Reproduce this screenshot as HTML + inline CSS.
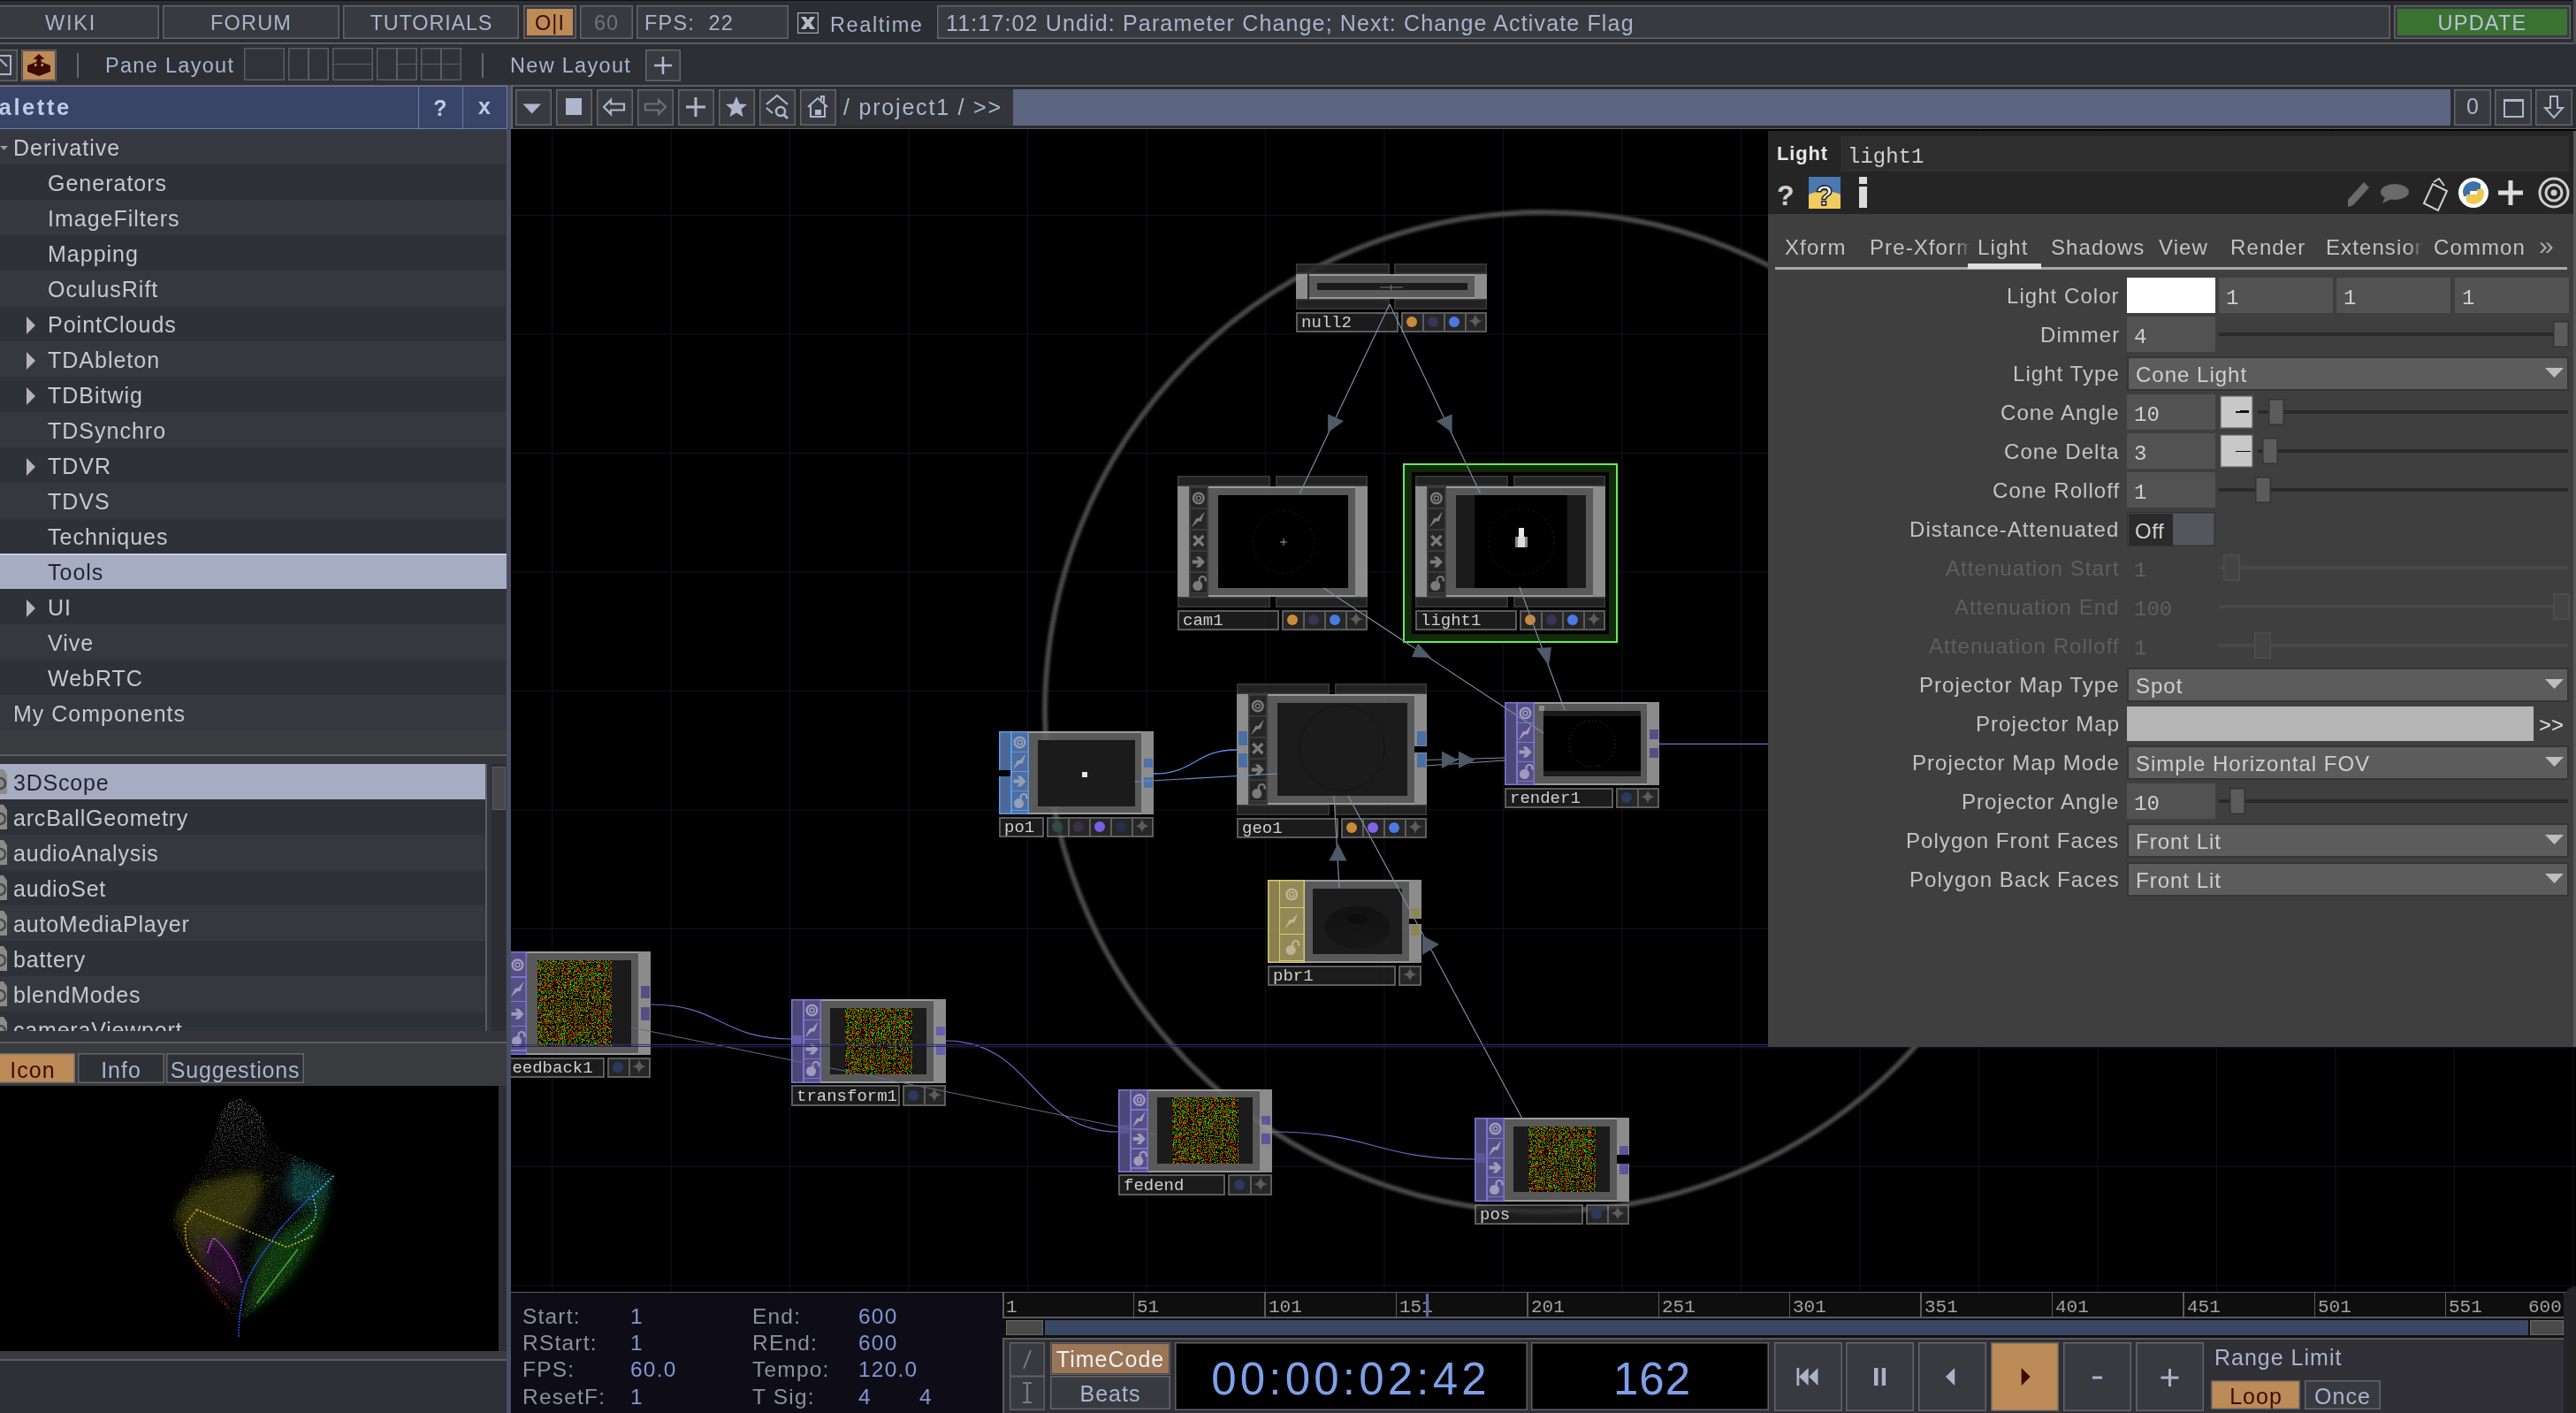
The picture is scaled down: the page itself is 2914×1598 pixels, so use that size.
<!DOCTYPE html><html><head><meta charset="utf-8"><style>html,body{margin:0;padding:0;width:2914px;height:1598px;overflow:hidden;background:#2e2f34}.a{position:absolute;box-sizing:border-box}.t{white-space:pre;-webkit-font-smoothing:antialiased;will-change:transform}svg{overflow:visible}</style></head><body><div class="a" style="left:0.0px;top:0.0px;width:2914.0px;height:1598.0px;background:#2e2f34;"></div>
<div class="a" style="left:0.0px;top:0.0px;width:2914.0px;height:1.2px;background:#111111;"></div>
<div class="a" style="left:0.0px;top:1.2px;width:2914.0px;height:46.8px;background:#2c2d32;"></div>
<div class="a" style="left:0.0px;top:48.0px;width:2914.0px;height:1.5px;background:#5c5d61;"></div>
<div class="a" style="left:-2.0px;top:6.0px;width:182.0px;height:38.0px;background:#393a40;box-shadow:inset 0 0 0 1.5px #64656a;"></div>
<div class="a t" style="top:15.1px;font-family:'Liberation Sans', sans-serif;font-size:23.5px;line-height:23.5px;color:#a9b3cc;letter-spacing:1.8px;left:-420.0px;width:1000px;text-align:center;">WIKI</div>
<div class="a" style="left:184.0px;top:6.0px;width:200.0px;height:38.0px;background:#393a40;box-shadow:inset 0 0 0 1.5px #64656a;"></div>
<div class="a t" style="top:15.1px;font-family:'Liberation Sans', sans-serif;font-size:23.5px;line-height:23.5px;color:#a9b3cc;letter-spacing:1.2px;left:-216.0px;width:1000px;text-align:center;">FORUM</div>
<div class="a" style="left:388.0px;top:6.0px;width:199.0px;height:38.0px;background:#393a40;box-shadow:inset 0 0 0 1.5px #64656a;"></div>
<div class="a t" style="top:15.1px;font-family:'Liberation Sans', sans-serif;font-size:23.5px;line-height:23.5px;color:#a9b3cc;letter-spacing:0.8px;left:-12.5px;width:1000px;text-align:center;">TUTORIALS</div>
<div class="a" style="left:592.0px;top:6.0px;width:60.0px;height:38.0px;background:#393a40;box-shadow:inset 0 0 0 1.5px #64656a;"></div>
<div class="a" style="left:596.0px;top:10.0px;width:52.0px;height:30.0px;background:#bd8b57;"></div>
<div class="a t" style="top:15.1px;font-family:'Liberation Sans', sans-serif;font-size:23.5px;line-height:23.5px;color:#3a0c08;letter-spacing:1px;left:122.0px;width:1000px;text-align:center;">O|I</div>
<div class="a" style="left:656.0px;top:6.0px;width:60.0px;height:38.0px;background:#393a40;box-shadow:inset 0 0 0 1.5px #64656a;"></div>
<div class="a t" style="top:15.1px;font-family:'Liberation Sans', sans-serif;font-size:23.5px;line-height:23.5px;color:#717277;letter-spacing:1px;left:186.0px;width:1000px;text-align:center;">60</div>
<div class="a" style="left:720.0px;top:6.0px;width:172.0px;height:38.0px;background:#393a40;box-shadow:inset 0 0 0 1.5px #64656a;"></div>
<div class="a t" style="top:15.1px;font-family:'Liberation Sans', sans-serif;font-size:23.5px;line-height:23.5px;color:#a9b3cc;letter-spacing:1.2px;left:729.0px;">FPS:&nbsp;&nbsp;22</div>
<div class="a" style="left:902.0px;top:14.0px;width:24.0px;height:24.0px;background:#2c2d32;box-shadow:inset 0 0 0 1.2px #a8a8ac;"></div>
<svg class="a" style="left:902px;top:14px;" width="24" height="24" viewBox="0 0 24 24"><path d="M4 5 H9.5 L12 8.8 L14.5 5 H20 L15 12 L20 19 H14.5 L12 15.2 L9.5 19 H4 L9 12 Z" fill="#b4bccc"/></svg>
<div class="a t" style="top:16.6px;font-family:'Liberation Sans', sans-serif;font-size:23.5px;line-height:23.5px;color:#a9b3cc;letter-spacing:1.6px;left:939.0px;">Realtime</div>
<div class="a" style="left:1060.0px;top:6.0px;width:1644.0px;height:38.0px;background:#393a40;box-shadow:inset 0 0 0 1.5px #64656a;"></div>
<div class="a t" style="top:13.8px;font-family:'Liberation Sans', sans-serif;font-size:25px;line-height:25px;color:#a9b3cc;letter-spacing:1.15px;left:1069.5px;">11:17:02 Undid: Parameter Change; Next: Change Activate Flag</div>
<div class="a" style="left:2708.0px;top:6.0px;width:200.0px;height:38.0px;background:#393a40;box-shadow:inset 0 0 0 1.5px #64656a;"></div>
<div class="a" style="left:2712.0px;top:10.0px;width:192.0px;height:30.0px;background:#3a7232;"></div>
<div class="a t" style="top:15.1px;font-family:'Liberation Sans', sans-serif;font-size:23.5px;line-height:23.5px;color:#b9c2d6;letter-spacing:1.2px;left:2308.0px;width:1000px;text-align:center;">UPDATE</div>
<div class="a" style="left:2911.0px;top:0.0px;width:3.0px;height:146.0px;background:#4a4b50;"></div>
<div class="a" style="left:0.0px;top:49.5px;width:2914.0px;height:46.5px;background:#2e2f34;"></div>
<div class="a" style="left:-4.0px;top:56.0px;width:24.0px;height:36.0px;background:#393a40;box-shadow:inset 0 0 0 1.5px #64656a;"></div>
<svg class="a" style="left:0px;top:62px;" width="14" height="24" viewBox="0 0 14 24"><rect x="-10" y="1" width="22" height="21" fill="none" stroke="#a9b3cc" stroke-width="2"/><path d="M0 5 L8 13" stroke="#a9b3cc" stroke-width="2"/></svg>
<div class="a" style="left:24.0px;top:56.0px;width:40.0px;height:36.0px;background:#2e2f34;box-shadow:inset 0 0 0 1.5px #64656a;"></div>
<div class="a" style="left:26.0px;top:58.0px;width:36.0px;height:32.0px;background:#bd8b57;"></div>
<svg class="a" style="left:26px;top:58px;" width="36" height="32" viewBox="0 0 36 32"><path d="M5 16 L18 11 L31 16 L31 23 L18 28 L5 23 Z" fill="#3d0a05"/><path d="M13 14 L13 17 L23 17 L23 14" fill="#c08c5a"/><path d="M18 3 L24.5 9 L20.5 9 L20.5 18 L15.5 18 L15.5 9 L11.5 9 Z" fill="#3d0a05"/></svg>
<div class="a" style="left:87.0px;top:60.0px;width:2.0px;height:28.0px;background:#66676b;"></div>
<div class="a t" style="top:63.1px;font-family:'Liberation Sans', sans-serif;font-size:23.5px;line-height:23.5px;color:#a9b3cc;letter-spacing:1.3px;left:119.0px;">Pane Layout</div>
<div class="a" style="left:276.3px;top:54.2px;width:45.5px;height:37.2px;background:#31323a;box-shadow:inset 0 0 0 1.5px #5c5d62;"></div>
<div class="a" style="left:326.2px;top:54.2px;width:45.5px;height:37.2px;background:#31323a;box-shadow:inset 0 0 0 1.5px #5c5d62;"></div>
<div class="a" style="left:348.2px;top:54.2px;width:1.5px;height:37.2px;background:#5c5d62;"></div>
<div class="a" style="left:376.4px;top:54.2px;width:45.5px;height:37.2px;background:#31323a;box-shadow:inset 0 0 0 1.5px #5c5d62;"></div>
<div class="a" style="left:376.4px;top:71.8px;width:45.5px;height:1.5px;background:#5c5d62;"></div>
<div class="a" style="left:426.3px;top:54.2px;width:45.5px;height:37.2px;background:#31323a;box-shadow:inset 0 0 0 1.5px #5c5d62;"></div>
<div class="a" style="left:448.3px;top:54.2px;width:1.5px;height:37.2px;background:#5c5d62;"></div>
<div class="a" style="left:448.3px;top:71.8px;width:23.5px;height:1.5px;background:#5c5d62;"></div>
<div class="a" style="left:476.3px;top:54.2px;width:45.5px;height:37.2px;background:#31323a;box-shadow:inset 0 0 0 1.5px #5c5d62;"></div>
<div class="a" style="left:498.3px;top:54.2px;width:1.5px;height:37.2px;background:#5c5d62;"></div>
<div class="a" style="left:476.3px;top:71.8px;width:45.5px;height:1.5px;background:#5c5d62;"></div>
<div class="a" style="left:545.0px;top:60.0px;width:2.0px;height:28.0px;background:#66676b;"></div>
<div class="a t" style="top:63.1px;font-family:'Liberation Sans', sans-serif;font-size:23.5px;line-height:23.5px;color:#a9b3cc;letter-spacing:1.3px;left:576.5px;">New Layout</div>
<div class="a" style="left:730.0px;top:56.0px;width:40.0px;height:36.0px;background:#393a40;box-shadow:inset 0 0 0 1.5px #64656a;"></div>
<svg class="a" style="left:730px;top:56px;" width="40" height="36" viewBox="0 0 40 36"><path d="M20 8 V28 M10 18 H30" stroke="#b0b9d0" stroke-width="2.5"/></svg>
<div class="a" style="left:0.0px;top:96.0px;width:2914.0px;height:1.5px;background:#5c5d61;"></div>
<div class="a" style="left:0.0px;top:96.5px;width:573.0px;height:49.5px;background:#384468;"></div>
<div class="a" style="left:0.0px;top:96.5px;width:573.0px;height:1.5px;background:#6a7db0;"></div>
<div class="a" style="left:0.0px;top:144.5px;width:573.0px;height:1.5px;background:#6a7db0;"></div>
<div class="a" style="left:473.0px;top:97.0px;width:1.2px;height:48.0px;background:#6a7db0;"></div>
<div class="a" style="left:523.0px;top:97.0px;width:1.2px;height:48.0px;background:#6a7db0;"></div>
<div class="a t" style="top:108.7px;font-family:'Liberation Sans', sans-serif;font-size:25.5px;line-height:25.5px;color:#c0cae8;font-weight:700;letter-spacing:2.6px;left:-21.0px;">Palette</div>
<div class="a t" style="top:109.8px;font-family:'Liberation Sans', sans-serif;font-size:25px;line-height:25px;color:#c0cae8;font-weight:700;left:-2.0px;width:1000px;text-align:center;">?</div>
<div class="a t" style="top:107.8px;font-family:'Liberation Sans', sans-serif;font-size:25px;line-height:25px;color:#c0cae8;font-weight:700;left:48.0px;width:1000px;text-align:center;">x</div>
<div class="a" style="left:578.0px;top:97.5px;width:2336.0px;height:48.5px;background:#2c2d32;"></div>
<div class="a" style="left:573.0px;top:96.0px;width:5.0px;height:1502.0px;background:#4b4d66;"></div>
<div class="a" style="left:582.5px;top:100.5px;width:41.5px;height:41.5px;background:#393a40;box-shadow:inset 0 0 0 1.5px #64656a;"></div>
<svg class="a" style="left:582px;top:100px;" width="42" height="42" viewBox="0 0 42 42"><path d="M9.5 17.5 L30 17.5 L19.7 28.5 Z" fill="#aeb6cc"/></svg>
<div class="a" style="left:628.5px;top:100.5px;width:41.5px;height:41.5px;background:#393a40;box-shadow:inset 0 0 0 1.5px #64656a;"></div>
<svg class="a" style="left:628px;top:100px;" width="42" height="42" viewBox="0 0 42 42"><rect x="12" y="11" width="18" height="19" fill="#aeb6cc"/></svg>
<div class="a" style="left:674.5px;top:100.5px;width:41.5px;height:41.5px;background:#393a40;box-shadow:inset 0 0 0 1.5px #64656a;"></div>
<svg class="a" style="left:674px;top:100px;" width="42" height="42" viewBox="0 0 42 42"><path d="M9 21 L17 13 L17 17.5 L32 17.5 L32 24.5 L17 24.5 L17 29 Z" fill="none" stroke="#aeb6cc" stroke-width="2.2"/></svg>
<div class="a" style="left:720.5px;top:100.5px;width:41.5px;height:41.5px;background:#393a40;box-shadow:inset 0 0 0 1.5px #64656a;"></div>
<svg class="a" style="left:720px;top:100px;" width="42" height="42" viewBox="0 0 42 42"><path d="M33 21 L25 13 L25 17.5 L10 17.5 L10 24.5 L25 24.5 L25 29 Z" fill="none" stroke="#6a6e78" stroke-width="2.2"/></svg>
<div class="a" style="left:766.5px;top:100.5px;width:41.5px;height:41.5px;background:#393a40;box-shadow:inset 0 0 0 1.5px #64656a;"></div>
<svg class="a" style="left:766px;top:100px;" width="42" height="42" viewBox="0 0 42 42"><path d="M21 10 V32 M10 21 H32" stroke="#aeb6cc" stroke-width="3"/></svg>
<div class="a" style="left:812.5px;top:100.5px;width:41.5px;height:41.5px;background:#393a40;box-shadow:inset 0 0 0 1.5px #64656a;"></div>
<svg class="a" style="left:812px;top:100px;" width="42" height="42" viewBox="0 0 42 42"><path d="M21 9 L24.5 17.5 L33 18 L26.5 23.5 L28.5 32 L21 27.5 L13.5 32 L15.5 23.5 L9 18 L17.5 17.5 Z" fill="#aeb6cc"/></svg>
<div class="a" style="left:858.5px;top:100.5px;width:41.5px;height:41.5px;background:#393a40;box-shadow:inset 0 0 0 1.5px #64656a;"></div>
<svg class="a" style="left:858px;top:100px;" width="42" height="42" viewBox="0 0 42 42"><path d="M9 18 L21 8 L33 18 M9 22 L16 28" stroke="#aeb6cc" stroke-width="2.2" fill="none"/><circle cx="25" cy="26" r="5" fill="none" stroke="#aeb6cc" stroke-width="2.5"/><path d="M28.5 29.5 L33 34" stroke="#aeb6cc" stroke-width="3"/></svg>
<div class="a" style="left:904.5px;top:100.5px;width:41.5px;height:41.5px;background:#393a40;box-shadow:inset 0 0 0 1.5px #64656a;"></div>
<svg class="a" style="left:904px;top:100px;" width="42" height="42" viewBox="0 0 42 42"><path d="M10 21 L21 11 L32 21 M13 19 V32 H29 V19 M25 13 V9 H28 V16" stroke="#aeb6cc" stroke-width="2" fill="none"/><rect x="18" y="24" width="7" height="6" fill="#aeb6cc"/></svg>
<div class="a" style="left:950.0px;top:100.5px;width:196.0px;height:41.5px;background:#34353b;"></div>
<div class="a t" style="top:108.8px;font-family:'Liberation Sans', sans-serif;font-size:25px;line-height:25px;color:#aeb6cc;letter-spacing:1.8px;left:954.0px;">/ project1 / &gt;&gt;</div>
<div class="a" style="left:1146.0px;top:100.5px;width:1626.0px;height:41.5px;background:#5d6680;"></div>
<div class="a" style="left:2776.0px;top:100.5px;width:42.0px;height:41.5px;background:#393a40;box-shadow:inset 0 0 0 1.5px #64656a;"></div>
<div class="a t" style="top:107.8px;font-family:'Liberation Sans', sans-serif;font-size:25px;line-height:25px;color:#aeb6cc;left:2297.0px;width:1000px;text-align:center;">0</div>
<div class="a" style="left:2822.0px;top:100.5px;width:42.0px;height:41.5px;background:#393a40;box-shadow:inset 0 0 0 1.5px #64656a;"></div>
<svg class="a" style="left:2822px;top:100px;" width="42" height="42" viewBox="0 0 42 42"><rect x="11" y="13" width="21" height="19" fill="none" stroke="#aeb6cc" stroke-width="2"/><rect x="11" y="12" width="21" height="3" fill="#aeb6cc"/></svg>
<div class="a" style="left:2868.0px;top:100.5px;width:42.0px;height:41.5px;background:#393a40;box-shadow:inset 0 0 0 1.5px #64656a;"></div>
<svg class="a" style="left:2868px;top:100px;" width="42" height="42" viewBox="0 0 42 42"><path d="M17 9 H25 V22 H31 L21 33 L11 22 H17 Z" fill="none" stroke="#aeb6cc" stroke-width="2"/></svg>
<div class="a" style="left:578.0px;top:144.5px;width:2336.0px;height:1.5px;background:#5c5d61;"></div>
<div class="a" style="left:578.0px;top:96.5px;width:1.5px;height:49.5px;background:#66676b;"></div>
<div class="a" style="left:572.5px;top:96.5px;width:1.5px;height:49.5px;background:#6a7db0;"></div>
<div class="a" style="left:578.0px;top:146.0px;width:2336.0px;height:2.0px;background:#121218;"></div>
<div class="a" style="left:0.0px;top:146.0px;width:573.0px;height:40.0px;background:#363840;"></div>
<div class="a t" style="top:154.5px;font-family:'Liberation Sans', sans-serif;font-size:25px;line-height:25px;color:#c6c8cc;letter-spacing:1.0px;left:14.5px;">Derivative</div>
<div class="a" style="left:0.0px;top:186.0px;width:573.0px;height:40.0px;background:#2f3139;"></div>
<div class="a t" style="top:194.5px;font-family:'Liberation Sans', sans-serif;font-size:25px;line-height:25px;color:#c6c8cc;letter-spacing:1.0px;left:54.0px;">Generators</div>
<div class="a" style="left:0.0px;top:226.0px;width:573.0px;height:40.0px;background:#363840;"></div>
<div class="a t" style="top:234.5px;font-family:'Liberation Sans', sans-serif;font-size:25px;line-height:25px;color:#c6c8cc;letter-spacing:1.0px;left:54.0px;">ImageFilters</div>
<div class="a" style="left:0.0px;top:266.0px;width:573.0px;height:40.0px;background:#2f3139;"></div>
<div class="a t" style="top:274.5px;font-family:'Liberation Sans', sans-serif;font-size:25px;line-height:25px;color:#c6c8cc;letter-spacing:1.0px;left:54.0px;">Mapping</div>
<div class="a" style="left:0.0px;top:306.0px;width:573.0px;height:40.0px;background:#363840;"></div>
<div class="a t" style="top:314.5px;font-family:'Liberation Sans', sans-serif;font-size:25px;line-height:25px;color:#c6c8cc;letter-spacing:1.0px;left:54.0px;">OculusRift</div>
<div class="a" style="left:0.0px;top:346.0px;width:573.0px;height:40.0px;background:#2f3139;"></div>
<div class="a t" style="top:354.5px;font-family:'Liberation Sans', sans-serif;font-size:25px;line-height:25px;color:#c6c8cc;letter-spacing:1.0px;left:54.0px;">PointClouds</div>
<svg class="a" style="left:29px;top:358px;" width="12" height="20" viewBox="0 0 12 20"><path d="M1 0 L11 10 L1 20 Z" fill="#b4b4b8"/></svg>
<div class="a" style="left:0.0px;top:386.0px;width:573.0px;height:40.0px;background:#363840;"></div>
<div class="a t" style="top:394.5px;font-family:'Liberation Sans', sans-serif;font-size:25px;line-height:25px;color:#c6c8cc;letter-spacing:1.0px;left:54.0px;">TDAbleton</div>
<svg class="a" style="left:29px;top:398px;" width="12" height="20" viewBox="0 0 12 20"><path d="M1 0 L11 10 L1 20 Z" fill="#b4b4b8"/></svg>
<div class="a" style="left:0.0px;top:426.0px;width:573.0px;height:40.0px;background:#2f3139;"></div>
<div class="a t" style="top:434.5px;font-family:'Liberation Sans', sans-serif;font-size:25px;line-height:25px;color:#c6c8cc;letter-spacing:1.0px;left:54.0px;">TDBitwig</div>
<svg class="a" style="left:29px;top:438px;" width="12" height="20" viewBox="0 0 12 20"><path d="M1 0 L11 10 L1 20 Z" fill="#b4b4b8"/></svg>
<div class="a" style="left:0.0px;top:466.0px;width:573.0px;height:40.0px;background:#363840;"></div>
<div class="a t" style="top:474.5px;font-family:'Liberation Sans', sans-serif;font-size:25px;line-height:25px;color:#c6c8cc;letter-spacing:1.0px;left:54.0px;">TDSynchro</div>
<div class="a" style="left:0.0px;top:506.0px;width:573.0px;height:40.0px;background:#2f3139;"></div>
<div class="a t" style="top:514.5px;font-family:'Liberation Sans', sans-serif;font-size:25px;line-height:25px;color:#c6c8cc;letter-spacing:1.0px;left:54.0px;">TDVR</div>
<svg class="a" style="left:29px;top:518px;" width="12" height="20" viewBox="0 0 12 20"><path d="M1 0 L11 10 L1 20 Z" fill="#b4b4b8"/></svg>
<div class="a" style="left:0.0px;top:546.0px;width:573.0px;height:40.0px;background:#363840;"></div>
<div class="a t" style="top:554.5px;font-family:'Liberation Sans', sans-serif;font-size:25px;line-height:25px;color:#c6c8cc;letter-spacing:1.0px;left:54.0px;">TDVS</div>
<div class="a" style="left:0.0px;top:586.0px;width:573.0px;height:40.0px;background:#2f3139;"></div>
<div class="a t" style="top:594.5px;font-family:'Liberation Sans', sans-serif;font-size:25px;line-height:25px;color:#c6c8cc;letter-spacing:1.0px;left:54.0px;">Techniques</div>
<div class="a" style="left:0.0px;top:626.0px;width:573.0px;height:40.0px;background:#a6adc2;"></div>
<div class="a" style="left:0.0px;top:626.0px;width:573.0px;height:1.5px;background:#c8ccd8;"></div>
<div class="a t" style="top:634.5px;font-family:'Liberation Sans', sans-serif;font-size:25px;line-height:25px;color:#1f2535;letter-spacing:1.0px;left:54.0px;">Tools</div>
<div class="a" style="left:0.0px;top:666.0px;width:573.0px;height:40.0px;background:#2f3139;"></div>
<div class="a t" style="top:674.5px;font-family:'Liberation Sans', sans-serif;font-size:25px;line-height:25px;color:#c6c8cc;letter-spacing:1.0px;left:54.0px;">UI</div>
<svg class="a" style="left:29px;top:678px;" width="12" height="20" viewBox="0 0 12 20"><path d="M1 0 L11 10 L1 20 Z" fill="#b4b4b8"/></svg>
<div class="a" style="left:0.0px;top:706.0px;width:573.0px;height:40.0px;background:#363840;"></div>
<div class="a t" style="top:714.5px;font-family:'Liberation Sans', sans-serif;font-size:25px;line-height:25px;color:#c6c8cc;letter-spacing:1.0px;left:54.0px;">Vive</div>
<div class="a" style="left:0.0px;top:746.0px;width:573.0px;height:40.0px;background:#2f3139;"></div>
<div class="a t" style="top:754.5px;font-family:'Liberation Sans', sans-serif;font-size:25px;line-height:25px;color:#c6c8cc;letter-spacing:1.0px;left:54.0px;">WebRTC</div>
<div class="a" style="left:0.0px;top:786.0px;width:573.0px;height:40.0px;background:#363840;"></div>
<div class="a t" style="top:794.5px;font-family:'Liberation Sans', sans-serif;font-size:25px;line-height:25px;color:#c6c8cc;letter-spacing:1.0px;left:14.5px;">My Components</div>
<svg class="a" style="left:0px;top:162px;" width="10" height="10" viewBox="0 0 10 10"><path d="M0 3 L9 3 L4.5 8 Z" fill="#9a9aa0"/></svg>
<div class="a" style="left:0.0px;top:826.0px;width:573.0px;height:27.0px;background:#3a3b3f;"></div>
<div class="a" style="left:0.0px;top:853.0px;width:573.0px;height:1.5px;background:#5c5d61;"></div>
<div class="a" style="left:0.0px;top:854.5px;width:573.0px;height:324.0px;background:#34353a;"></div>
<div class="a" style="left:0.0px;top:864.0px;width:549.0px;height:40.0px;background:#a6adc2;"></div>
<div class="a" style="left:0;top:864px;width:549px;height:40px;overflow:hidden"><div class="a t" style="left:14.7px;top:8.8px;font-family:'Liberation Sans', sans-serif;font-size:25px;line-height:25px;letter-spacing:0.8px;color:#1f2535">3DScope</div><svg class="a" style="left:-8px;top:4px" width="18" height="32"><path d="M2 2 L12 2 L16 8 L16 30 L2 30 Z" fill="#8a8a8a"/><circle cx="8" cy="18" r="6" fill="none" stroke="#4a4a4a" stroke-width="2.5"/></svg></div>
<div class="a" style="left:0.0px;top:904.0px;width:549.0px;height:40.0px;background:#2f3139;"></div>
<div class="a" style="left:0;top:904px;width:549px;height:40px;overflow:hidden"><div class="a t" style="left:14.7px;top:8.8px;font-family:'Liberation Sans', sans-serif;font-size:25px;line-height:25px;letter-spacing:0.8px;color:#c6c8cc">arcBallGeometry</div><svg class="a" style="left:-8px;top:4px" width="18" height="32"><path d="M2 2 L12 2 L16 8 L16 30 L2 30 Z" fill="#8a8a8a"/><circle cx="8" cy="18" r="6" fill="none" stroke="#4a4a4a" stroke-width="2.5"/></svg></div>
<div class="a" style="left:0.0px;top:944.0px;width:549.0px;height:40.0px;background:#363840;"></div>
<div class="a" style="left:0;top:944px;width:549px;height:40px;overflow:hidden"><div class="a t" style="left:14.7px;top:8.8px;font-family:'Liberation Sans', sans-serif;font-size:25px;line-height:25px;letter-spacing:0.8px;color:#c6c8cc">audioAnalysis</div><svg class="a" style="left:-8px;top:4px" width="18" height="32"><path d="M2 2 L12 2 L16 8 L16 30 L2 30 Z" fill="#8a8a8a"/><circle cx="8" cy="18" r="6" fill="none" stroke="#4a4a4a" stroke-width="2.5"/></svg></div>
<div class="a" style="left:0.0px;top:984.0px;width:549.0px;height:40.0px;background:#2f3139;"></div>
<div class="a" style="left:0;top:984px;width:549px;height:40px;overflow:hidden"><div class="a t" style="left:14.7px;top:8.8px;font-family:'Liberation Sans', sans-serif;font-size:25px;line-height:25px;letter-spacing:0.8px;color:#c6c8cc">audioSet</div><svg class="a" style="left:-8px;top:4px" width="18" height="32"><path d="M2 2 L12 2 L16 8 L16 30 L2 30 Z" fill="#8a8a8a"/><circle cx="8" cy="18" r="6" fill="none" stroke="#4a4a4a" stroke-width="2.5"/></svg></div>
<div class="a" style="left:0.0px;top:1024.0px;width:549.0px;height:40.0px;background:#363840;"></div>
<div class="a" style="left:0;top:1024px;width:549px;height:40px;overflow:hidden"><div class="a t" style="left:14.7px;top:8.8px;font-family:'Liberation Sans', sans-serif;font-size:25px;line-height:25px;letter-spacing:0.8px;color:#c6c8cc">autoMediaPlayer</div><svg class="a" style="left:-8px;top:4px" width="18" height="32"><path d="M2 2 L12 2 L16 8 L16 30 L2 30 Z" fill="#8a8a8a"/><circle cx="8" cy="18" r="6" fill="none" stroke="#4a4a4a" stroke-width="2.5"/></svg></div>
<div class="a" style="left:0.0px;top:1064.0px;width:549.0px;height:40.0px;background:#2f3139;"></div>
<div class="a" style="left:0;top:1064px;width:549px;height:40px;overflow:hidden"><div class="a t" style="left:14.7px;top:8.8px;font-family:'Liberation Sans', sans-serif;font-size:25px;line-height:25px;letter-spacing:0.8px;color:#c6c8cc">battery</div><svg class="a" style="left:-8px;top:4px" width="18" height="32"><path d="M2 2 L12 2 L16 8 L16 30 L2 30 Z" fill="#8a8a8a"/><circle cx="8" cy="18" r="6" fill="none" stroke="#4a4a4a" stroke-width="2.5"/></svg></div>
<div class="a" style="left:0.0px;top:1104.0px;width:549.0px;height:40.0px;background:#363840;"></div>
<div class="a" style="left:0;top:1104px;width:549px;height:40px;overflow:hidden"><div class="a t" style="left:14.7px;top:8.8px;font-family:'Liberation Sans', sans-serif;font-size:25px;line-height:25px;letter-spacing:0.8px;color:#c6c8cc">blendModes</div><svg class="a" style="left:-8px;top:4px" width="18" height="32"><path d="M2 2 L12 2 L16 8 L16 30 L2 30 Z" fill="#8a8a8a"/><circle cx="8" cy="18" r="6" fill="none" stroke="#4a4a4a" stroke-width="2.5"/></svg></div>
<div class="a" style="left:0.0px;top:1144.0px;width:549.0px;height:22.0px;background:#2f3139;"></div>
<div class="a" style="left:0;top:1144px;width:549px;height:22px;overflow:hidden"><div class="a t" style="left:14.7px;top:8.8px;font-family:'Liberation Sans', sans-serif;font-size:25px;line-height:25px;letter-spacing:0.8px;color:#c6c8cc">cameraViewport</div><svg class="a" style="left:-8px;top:4px" width="18" height="32"><path d="M2 2 L12 2 L16 8 L16 30 L2 30 Z" fill="#8a8a8a"/><circle cx="8" cy="18" r="6" fill="none" stroke="#4a4a4a" stroke-width="2.5"/></svg></div>
<div class="a" style="left:549.0px;top:864.0px;width:1.5px;height:302.0px;background:#5c5d61;"></div>
<div class="a" style="left:556.0px;top:864.0px;width:16.0px;height:302.0px;background:#2c2d31;"></div>
<div class="a" style="left:557.0px;top:867.0px;width:14.5px;height:49.0px;background:#46474c;box-shadow:inset 0 0 0 1px #5c5d61;"></div>
<div class="a" style="left:0.0px;top:1166.0px;width:573.0px;height:12.0px;background:#34353a;"></div>
<div class="a" style="left:0.0px;top:1178.0px;width:573.0px;height:1.5px;background:#5c5d61;"></div>
<div class="a" style="left:0.0px;top:1179.5px;width:573.0px;height:48.5px;background:#3a3b3f;"></div>
<div class="a" style="left:-2.0px;top:1191.0px;width:87.0px;height:34.0px;background:#bd8b57;box-shadow:inset 0 0 0 1.5px #6a6b70;"></div>
<div class="a t" style="top:1197.8px;font-family:'Liberation Sans', sans-serif;font-size:25px;line-height:25px;color:#3d0a05;letter-spacing:1.0px;left:-463.0px;width:1000px;text-align:center;">Icon</div>
<div class="a" style="left:88.0px;top:1191.0px;width:98.0px;height:34.0px;background:#2f3036;box-shadow:inset 0 0 0 1.5px #64656a;"></div>
<div class="a t" style="top:1197.8px;font-family:'Liberation Sans', sans-serif;font-size:25px;line-height:25px;color:#a9b3cc;letter-spacing:1.0px;left:-363.0px;width:1000px;text-align:center;">Info</div>
<div class="a" style="left:188.0px;top:1191.0px;width:156.0px;height:34.0px;background:#2f3036;box-shadow:inset 0 0 0 1.5px #64656a;"></div>
<div class="a t" style="top:1197.8px;font-family:'Liberation Sans', sans-serif;font-size:25px;line-height:25px;color:#a9b3cc;letter-spacing:0.8px;left:-234.0px;width:1000px;text-align:center;">Suggestions</div>
<div class="a" style="left:0.0px;top:1228.0px;width:564.0px;height:300.0px;background:#000;"></div>
<div class="a" style="left:0.0px;top:1528.0px;width:573.0px;height:9.0px;background:#3a3b3f;"></div>
<div class="a" style="left:0.0px;top:1537.0px;width:573.0px;height:1.5px;background:#5c5d61;"></div>
<div class="a" style="left:0.0px;top:1538.5px;width:573.0px;height:60.0px;background:#2f3036;"></div>
<svg class="a" style="left:180px;top:1235px;" width="200" height="280" viewBox="0 0 200 280"><defs><filter id="gl" x="-20%" y="-20%" width="140%" height="140%"><feGaussianBlur stdDeviation="0.6"/></filter><filter id="gl2" x="-30%" y="-30%" width="160%" height="160%"><feGaussianBlur stdDeviation="6"/></filter><filter id="speck" x="0" y="0" width="100%" height="100%"><feTurbulence type="fractalNoise" baseFrequency="0.7" numOctaves="2" seed="11" result="n"/><feColorMatrix in="n" type="matrix" values="0 0 0 0 0  0 0 0 0 0  0 0 0 0 0  4 0 0 0 -2.0" result="m"/><feComposite in="SourceGraphic" in2="m" operator="in" result="c"/><feGaussianBlur in="c" stdDeviation="0.4"/></filter><linearGradient id="hg" x1="0" y1="0" x2="0" y2="1"><stop offset="0" stop-color="#8a8a8a"/><stop offset="0.5" stop-color="#505050"/><stop offset="1" stop-color="#202020"/></linearGradient></defs><g filter="url(#gl2)" opacity="0.8"><path d="M20 140 C30 110 60 95 110 90 C130 120 90 170 50 200 Z" fill="#3a3a08"/><path d="M150 80 C180 85 200 95 190 125 C170 140 150 130 140 110 Z" fill="#0c3a3a"/><path d="M110 170 C150 160 175 130 190 130 C175 190 140 230 100 250 Z" fill="#0a3a10"/><path d="M45 160 L85 175 L95 235 L55 215 Z" fill="#30103a"/><path d="M25 175 C40 205 70 240 90 262 L55 225 Z" fill="#501008"/></g><g filter="url(#speck)" opacity="0.85"><path d="M68 31 C72 15 80 7.7 89 7.7 C102 8 115 20 119 37 C125 50 132 60 138 65 C160 75 190 85 197.5 94.8 C195 130 170 175 148.7 207 C130 230 105 250 91.3 260.4 C75 245 55 225 42.5 196.7 C25 175 12 150 17 143.6 C25 115 40 95 48.8 84 C55 70 63 50 68 31 Z" fill="#2c2c2c"/><path d="M68 31 C72 15 80 7.7 89 7.7 C102 8 115 20 119 37 C122 55 120 75 110 90 C90 95 70 100 55 110 C52 85 60 55 68 31 Z" fill="url(#hg)"/><path d="M17 143.6 C25 115 40 95 60 100 C90 95 120 92 140 95 C110 120 80 150 42.5 196.7 C25 175 12 150 17 143.6 Z" fill="#6a6a18" opacity="0.7"/><path d="M197.5 94.8 C195 130 170 175 148.7 207 C130 230 105 250 91.3 260.4 C110 200 140 150 174 116 Z" fill="#3a8a30" opacity="0.7"/><path d="M150 70 C175 80 195 88 197.5 94.8 C190 115 170 130 150 120 Z" fill="#3a9a9a" opacity="0.7"/><path d="M30 170 C45 195 70 230 91 258 C70 240 45 210 30 170 Z" fill="#c03018"/></g><g filter="url(#gl)" fill="none" stroke-width="1.6"><path d="M42.5 133 L144.4 175.5 L174 162.8" stroke="#c8c030" stroke-dasharray="2 2"/><path d="M42.5 133 L29.7 150 C29 162 31 170 31.9 175.5 C40 195 55 205 68 216" stroke="#e0a020" stroke-dasharray="2 2"/><path d="M197.5 94.8 L174 118 C178 130 178 138 176 143.6 C170 152 162 158 153 165" stroke="#40d0d0" stroke-dasharray="2 2"/><path d="M174 116 C150 140 135 155 127.4 169 C115 185 105 200 97.7 218 C92 240 90 260 90 277" stroke="#3050ff" stroke-dasharray="2 1.2"/><path d="M55 182 C57 175 59 168 61.6 165 C75 175 88 195 93.4 216" stroke="#c040e0" stroke-dasharray="2 1.2"/><path d="M157 177.6 C140 200 125 220 110.4 239" stroke="#50c040" opacity="0.8"/></g></svg>
<div class="a" style="left:578px;top:146px;width:2336px;height:1316px;overflow:hidden"><div class="a" style="left:-578px;top:-146px;width:2914px;height:1598px">
<svg class="a" style="left:578px;top:146px;" width="2336" height="1316" viewBox="0 0 2336 1316"><rect x="0" y="0" width="2336" height="1316" fill="#000"/><path d="M46.5 0 V1316 M181.0 0 V1316 M315.5 0 V1316 M450.0 0 V1316 M584.5 0 V1316 M719.0 0 V1316 M853.4 0 V1316 M987.9 0 V1316 M1122.4 0 V1316 M1256.9 0 V1316 M1391.4 0 V1316 M1525.9 0 V1316 M1660.4 0 V1316 M1794.9 0 V1316 M1929.4 0 V1316 M2063.8 0 V1316 M2198.3 0 V1316 M2332.8 0 V1316 M0 97.5 H2336 M0 232.0 H2336 M0 366.5 H2336 M0 501.0 H2336 M0 635.5 H2336 M0 770.0 H2336 M0 904.4 H2336 M0 1038.9 H2336 M0 1173.4 H2336 M0 1307.9 H2336" stroke="#11111c" stroke-width="1.1" fill="none"/></svg>
<svg class="a" style="left:578px;top:146px;" width="2336" height="1316" viewBox="0 0 2336 1316"><defs><filter id="cblur" x="-5%" y="-5%" width="110%" height="110%"><feGaussianBlur stdDeviation="1.4"/></filter></defs><g filter="url(#cblur)"><circle cx="1169" cy="659" r="565" fill="none" stroke="#454545" stroke-width="6" /><circle cx="1169" cy="659" r="565" fill="none" stroke="#6a6a6a" stroke-width="2" stroke-dasharray="2 3" opacity="0.6"/></g></svg>
<div class="a" style="left:0;top:0;opacity:0.87">
<div class="a" style="left:1466.0px;top:298.0px;width:105.5px;height:12.0px;background:#282828;box-shadow:inset 0 0 0 1.5px #434343;"></div>
<div class="a" style="left:1577.0px;top:298.0px;width:105.0px;height:12.0px;background:#282828;box-shadow:inset 0 0 0 1.5px #434343;"></div>
<div class="a" style="left:1466.0px;top:310.0px;width:216.0px;height:28.0px;background:#676767;"></div>
<div class="a" style="left:1466.0px;top:310.0px;width:216.0px;height:2.0px;background:#b1b1b1;"></div>
<div class="a" style="left:1466.0px;top:336.0px;width:216.0px;height:2.0px;background:#b1b1b1;"></div>
<div class="a" style="left:1466.0px;top:310.0px;width:12.5px;height:28.0px;background:#a1a1a1;"></div>
<div class="a" style="left:1478.5px;top:310.0px;width:2.0px;height:28.0px;background:#303030;"></div>
<div class="a" style="left:1668.0px;top:310.0px;width:14.0px;height:28.0px;background:#a1a1a1;"></div>
<div class="a" style="left:1478.5px;top:310.0px;width:2.0px;height:28.0px;background:#303030;"></div>
<div class="a" style="left:1466.0px;top:338.0px;width:105.5px;height:12.0px;background:#282828;box-shadow:inset 0 0 0 1.5px #434343;"></div>
<div class="a" style="left:1577.0px;top:338.0px;width:105.0px;height:12.0px;background:#282828;box-shadow:inset 0 0 0 1.5px #434343;"></div>
</div>
<div class="a" style="left:1490.0px;top:320.0px;width:170.0px;height:8.0px;background:#1b1b1b;overflow:hidden"><svg width="170" height="8" style="position:absolute"><path d="M71 5 H97 M83.5 2 V8" stroke="#777" stroke-width="1"/></svg></div>
<div class="a" style="left:0;top:0;opacity:0.72">
<div class="a" style="left:1466.0px;top:352.5px;width:115.5px;height:23.5px;background:#262626;box-shadow:inset 0 0 0 2px #808080;"></div>
<div class="a" style="left:1584.5px;top:352.5px;width:97.5px;height:23.5px;background:#353535;box-shadow:inset 0 0 0 2px #808080;"></div>
<div class="a" style="left:1609.0px;top:352.5px;width:2.0px;height:23.5px;background:#808080;"></div>
<div class="a" style="left:1633.0px;top:352.5px;width:2.0px;height:23.5px;background:#808080;"></div>
<div class="a" style="left:1657.0px;top:352.5px;width:2.0px;height:23.5px;background:#808080;"></div>
</div>
<svg class="a" style="left:1590px;top:357px;" width="14" height="14" viewBox="0 0 14 14"><circle cx="7" cy="7" r="6" fill="#c98a3a"/></svg>
<svg class="a" style="left:1614px;top:357px;" width="14" height="14" viewBox="0 0 14 14"><circle cx="7" cy="7" r="6" fill="#3a3356"/></svg>
<svg class="a" style="left:1638px;top:357px;" width="14" height="14" viewBox="0 0 14 14"><circle cx="7" cy="7" r="6" fill="#4a7ae0"/></svg>
<svg class="a" style="left:1659px;top:353px;" width="20" height="20" viewBox="0 0 20 20"><path d="M10 2 Q11 9 18 10 Q11 11 10 18 Q9 11 2 10 Q9 9 10 2 Z" fill="#5c5c5c"/></svg>
<div class="a t" style="top:356.4px;font-family:'Liberation Mono', monospace;font-size:19px;line-height:19px;color:#cfcfcf;left:1472.0px;">null2</div>
<div class="a" style="left:0;top:0;opacity:0.87">
<div class="a" style="left:1332.0px;top:538.0px;width:105.0px;height:12.0px;background:#282828;box-shadow:inset 0 0 0 1.5px #434343;"></div>
<div class="a" style="left:1442.5px;top:538.0px;width:104.5px;height:12.0px;background:#282828;box-shadow:inset 0 0 0 1.5px #434343;"></div>
<div class="a" style="left:1332.0px;top:550.0px;width:215.0px;height:125.0px;background:#676767;"></div>
<div class="a" style="left:1332.0px;top:550.0px;width:215.0px;height:2.0px;background:#b1b1b1;"></div>
<div class="a" style="left:1332.0px;top:673.0px;width:215.0px;height:2.0px;background:#b1b1b1;"></div>
<div class="a" style="left:1332.0px;top:550.0px;width:12.5px;height:125.0px;background:#a1a1a1;"></div>
<div class="a" style="left:1344.5px;top:550.0px;width:22.5px;height:125.0px;background:#303030;"></div>
<div class="a" style="left:1533.0px;top:550.0px;width:14.0px;height:125.0px;background:#a1a1a1;"></div>
<div class="a" style="left:1344.5px;top:550.0px;width:22.5px;height:125.0px;background:#434343;"></div>
<div class="a" style="left:1346.5px;top:552.0px;width:18.5px;height:22.0px;background:#2c2c2c;"></div>
<svg class="a" style="left:1345px;top:553px;" width="20" height="20" viewBox="0 0 20 20"><g transform="translate(10,10) translate(0.8,0.5)"><circle cx="0" cy="0" r="5.8" fill="none" stroke="#8e8e8e" stroke-width="2.4"/><circle cx="0" cy="0" r="2.5" fill="none" stroke="#8e8e8e" stroke-width="1.5"/></g></svg>
<div class="a" style="left:1346.5px;top:576.0px;width:18.5px;height:22.0px;background:#2c2c2c;"></div>
<svg class="a" style="left:1345px;top:577px;" width="20" height="20" viewBox="0 0 20 20"><g transform="translate(10,10) translate(0.8,0.5)"><path d="M-8 9 L-2.5 -1.5 L0.5 -1.5 L7 -9 L3 2 L-0.5 2 Z" fill="#8e8e8e"/></g></svg>
<div class="a" style="left:1346.5px;top:600.0px;width:18.5px;height:22.0px;background:#2c2c2c;"></div>
<svg class="a" style="left:1345px;top:601px;" width="20" height="20" viewBox="0 0 20 20"><g transform="translate(10,10) translate(0.8,0.5)"><path d="M-5.5 -5.5 L5.5 5.5 M5.5 -5.5 L-5.5 5.5" stroke="#8e8e8e" stroke-width="3.2"/></g></svg>
<div class="a" style="left:1346.5px;top:624.0px;width:18.5px;height:22.0px;background:#2c2c2c;"></div>
<svg class="a" style="left:1345px;top:625px;" width="20" height="20" viewBox="0 0 20 20"><g transform="translate(10,10) translate(0.8,0.5)"><path d="M-7 -2 H0 L-3 -6 H1.5 L7 0 L1.5 6 H-3 L0 2 H-7 Z" fill="#8e8e8e"/></g></svg>
<div class="a" style="left:1346.5px;top:648.0px;width:18.5px;height:22.0px;background:#2c2c2c;"></div>
<svg class="a" style="left:1345px;top:649px;" width="20" height="20" viewBox="0 0 20 20"><g transform="translate(10,10) translate(0.8,0.5)"><circle cx="-1" cy="3" r="5.5" fill="#8e8e8e"/><path d="M1 -1 V-4 A3.5 3.5 0 0 1 8 -4 V-2" fill="none" stroke="#8e8e8e" stroke-width="2.2"/></g></svg>
<div class="a" style="left:1346.5px;top:672.0px;width:18.5px;height:0.5px;background:#2c2c2c;"></div>
<div class="a" style="left:1332.0px;top:675.0px;width:105.0px;height:12.0px;background:#282828;box-shadow:inset 0 0 0 1.5px #434343;"></div>
<div class="a" style="left:1442.5px;top:675.0px;width:104.5px;height:12.0px;background:#282828;box-shadow:inset 0 0 0 1.5px #434343;"></div>
</div>
<div class="a" style="left:1378.0px;top:560.0px;width:147.0px;height:105.0px;background:#000;overflow:hidden"><svg width="148" height="105" style="position:absolute"><circle cx="74" cy="53" r="35" fill="none" stroke="#2a2a2a" stroke-dasharray="1.5 4"/><path d="M70 53 H78 M74 49 V57" stroke="#999" stroke-width="1"/></svg></div>
<div class="a" style="left:0;top:0;opacity:0.72">
<div class="a" style="left:1332.0px;top:689.5px;width:114.5px;height:23.5px;background:#262626;box-shadow:inset 0 0 0 2px #808080;"></div>
<div class="a" style="left:1449.5px;top:689.5px;width:97.5px;height:23.5px;background:#353535;box-shadow:inset 0 0 0 2px #808080;"></div>
<div class="a" style="left:1474.0px;top:689.5px;width:2.0px;height:23.5px;background:#808080;"></div>
<div class="a" style="left:1498.0px;top:689.5px;width:2.0px;height:23.5px;background:#808080;"></div>
<div class="a" style="left:1522.0px;top:689.5px;width:2.0px;height:23.5px;background:#808080;"></div>
</div>
<svg class="a" style="left:1455px;top:694px;" width="14" height="14" viewBox="0 0 14 14"><circle cx="7" cy="7" r="6" fill="#c98a3a"/></svg>
<svg class="a" style="left:1479px;top:694px;" width="14" height="14" viewBox="0 0 14 14"><circle cx="7" cy="7" r="6" fill="#3a3356"/></svg>
<svg class="a" style="left:1503px;top:694px;" width="14" height="14" viewBox="0 0 14 14"><circle cx="7" cy="7" r="6" fill="#4a7ae0"/></svg>
<svg class="a" style="left:1524px;top:690px;" width="20" height="20" viewBox="0 0 20 20"><path d="M10 2 Q11 9 18 10 Q11 11 10 18 Q9 11 2 10 Q9 9 10 2 Z" fill="#5c5c5c"/></svg>
<div class="a t" style="top:693.4px;font-family:'Liberation Mono', monospace;font-size:19px;line-height:19px;color:#cfcfcf;left:1338.0px;">cam1</div>
<div class="a" style="left:1587.0px;top:524.0px;width:243.0px;height:203.0px;background:#12290b;box-shadow:inset 0 0 0 2px #66ee55;"></div>
<div class="a" style="left:1597.0px;top:534.0px;width:223.0px;height:183.0px;background:#000;"></div>
<div class="a" style="left:0;top:0;opacity:0.87">
<div class="a" style="left:1601.0px;top:538.0px;width:105.0px;height:12.0px;background:#282828;box-shadow:inset 0 0 0 1.5px #434343;"></div>
<div class="a" style="left:1711.5px;top:538.0px;width:104.5px;height:12.0px;background:#282828;box-shadow:inset 0 0 0 1.5px #434343;"></div>
<div class="a" style="left:1601.0px;top:550.0px;width:215.0px;height:125.0px;background:#676767;"></div>
<div class="a" style="left:1601.0px;top:550.0px;width:215.0px;height:2.0px;background:#b1b1b1;"></div>
<div class="a" style="left:1601.0px;top:673.0px;width:215.0px;height:2.0px;background:#b1b1b1;"></div>
<div class="a" style="left:1601.0px;top:550.0px;width:12.5px;height:125.0px;background:#a1a1a1;"></div>
<div class="a" style="left:1613.5px;top:550.0px;width:22.5px;height:125.0px;background:#303030;"></div>
<div class="a" style="left:1802.0px;top:550.0px;width:14.0px;height:125.0px;background:#a1a1a1;"></div>
<div class="a" style="left:1613.5px;top:550.0px;width:22.5px;height:125.0px;background:#434343;"></div>
<div class="a" style="left:1615.5px;top:552.0px;width:18.5px;height:22.0px;background:#2c2c2c;"></div>
<svg class="a" style="left:1614px;top:553px;" width="20" height="20" viewBox="0 0 20 20"><g transform="translate(10,10) translate(0.8,0.5)"><circle cx="0" cy="0" r="5.8" fill="none" stroke="#8e8e8e" stroke-width="2.4"/><circle cx="0" cy="0" r="2.5" fill="none" stroke="#8e8e8e" stroke-width="1.5"/></g></svg>
<div class="a" style="left:1615.5px;top:576.0px;width:18.5px;height:22.0px;background:#2c2c2c;"></div>
<svg class="a" style="left:1614px;top:577px;" width="20" height="20" viewBox="0 0 20 20"><g transform="translate(10,10) translate(0.8,0.5)"><path d="M-8 9 L-2.5 -1.5 L0.5 -1.5 L7 -9 L3 2 L-0.5 2 Z" fill="#8e8e8e"/></g></svg>
<div class="a" style="left:1615.5px;top:600.0px;width:18.5px;height:22.0px;background:#2c2c2c;"></div>
<svg class="a" style="left:1614px;top:601px;" width="20" height="20" viewBox="0 0 20 20"><g transform="translate(10,10) translate(0.8,0.5)"><path d="M-5.5 -5.5 L5.5 5.5 M5.5 -5.5 L-5.5 5.5" stroke="#8e8e8e" stroke-width="3.2"/></g></svg>
<div class="a" style="left:1615.5px;top:624.0px;width:18.5px;height:22.0px;background:#2c2c2c;"></div>
<svg class="a" style="left:1614px;top:625px;" width="20" height="20" viewBox="0 0 20 20"><g transform="translate(10,10) translate(0.8,0.5)"><path d="M-7 -2 H0 L-3 -6 H1.5 L7 0 L1.5 6 H-3 L0 2 H-7 Z" fill="#8e8e8e"/></g></svg>
<div class="a" style="left:1615.5px;top:648.0px;width:18.5px;height:22.0px;background:#2c2c2c;"></div>
<svg class="a" style="left:1614px;top:649px;" width="20" height="20" viewBox="0 0 20 20"><g transform="translate(10,10) translate(0.8,0.5)"><circle cx="-1" cy="3" r="5.5" fill="#8e8e8e"/><path d="M1 -1 V-4 A3.5 3.5 0 0 1 8 -4 V-2" fill="none" stroke="#8e8e8e" stroke-width="2.2"/></g></svg>
<div class="a" style="left:1615.5px;top:672.0px;width:18.5px;height:0.5px;background:#2c2c2c;"></div>
<div class="a" style="left:1601.0px;top:675.0px;width:105.0px;height:12.0px;background:#282828;box-shadow:inset 0 0 0 1.5px #434343;"></div>
<div class="a" style="left:1711.5px;top:675.0px;width:104.5px;height:12.0px;background:#282828;box-shadow:inset 0 0 0 1.5px #434343;"></div>
</div>
<div class="a" style="left:1647.0px;top:560.0px;width:147.0px;height:105.0px;background:#1b1b1b;overflow:hidden"><div class="a" style="left:21px;top:0;width:105px;height:105px;background:#000"></div><svg width="147" height="105" style="position:absolute"><circle cx="74" cy="53" r="37" fill="none" stroke="#2a2a2a" stroke-dasharray="1.5 4"/><rect x="71" y="37" width="6" height="12" fill="#e8e8e8"/><rect x="67" y="47" width="14" height="12" rx="3" fill="#dcdcdc"/><rect x="67" y="47" width="3" height="12" fill="#888"/><rect x="78" y="47" width="3" height="12" fill="#888"/></svg></div>
<div class="a" style="left:0;top:0;opacity:0.72">
<div class="a" style="left:1601.0px;top:689.5px;width:114.5px;height:23.5px;background:#262626;box-shadow:inset 0 0 0 2px #808080;"></div>
<div class="a" style="left:1718.5px;top:689.5px;width:97.5px;height:23.5px;background:#353535;box-shadow:inset 0 0 0 2px #808080;"></div>
<div class="a" style="left:1743.0px;top:689.5px;width:2.0px;height:23.5px;background:#808080;"></div>
<div class="a" style="left:1767.0px;top:689.5px;width:2.0px;height:23.5px;background:#808080;"></div>
<div class="a" style="left:1791.0px;top:689.5px;width:2.0px;height:23.5px;background:#808080;"></div>
</div>
<svg class="a" style="left:1724px;top:694px;" width="14" height="14" viewBox="0 0 14 14"><circle cx="7" cy="7" r="6" fill="#c98a3a"/></svg>
<svg class="a" style="left:1748px;top:694px;" width="14" height="14" viewBox="0 0 14 14"><circle cx="7" cy="7" r="6" fill="#3a3356"/></svg>
<svg class="a" style="left:1772px;top:694px;" width="14" height="14" viewBox="0 0 14 14"><circle cx="7" cy="7" r="6" fill="#4a7ae0"/></svg>
<svg class="a" style="left:1793px;top:690px;" width="20" height="20" viewBox="0 0 20 20"><path d="M10 2 Q11 9 18 10 Q11 11 10 18 Q9 11 2 10 Q9 9 10 2 Z" fill="#5c5c5c"/></svg>
<div class="a t" style="top:693.4px;font-family:'Liberation Mono', monospace;font-size:19px;line-height:19px;color:#cfcfcf;left:1607.0px;">light1</div>
<div class="a" style="left:0;top:0;opacity:0.87">
<div class="a" style="left:1399.0px;top:773.0px;width:105.0px;height:12.0px;background:#282828;box-shadow:inset 0 0 0 1.5px #434343;"></div>
<div class="a" style="left:1509.5px;top:773.0px;width:104.5px;height:12.0px;background:#282828;box-shadow:inset 0 0 0 1.5px #434343;"></div>
<div class="a" style="left:1399.0px;top:785.0px;width:215.0px;height:125.0px;background:#676767;"></div>
<div class="a" style="left:1399.0px;top:785.0px;width:215.0px;height:2.0px;background:#b1b1b1;"></div>
<div class="a" style="left:1399.0px;top:908.0px;width:215.0px;height:2.0px;background:#b1b1b1;"></div>
<div class="a" style="left:1399.0px;top:785.0px;width:12.5px;height:125.0px;background:#a1a1a1;"></div>
<div class="a" style="left:1411.5px;top:785.0px;width:22.5px;height:125.0px;background:#303030;"></div>
<div class="a" style="left:1600.0px;top:785.0px;width:14.0px;height:125.0px;background:#a1a1a1;"></div>
<div class="a" style="left:1411.5px;top:785.0px;width:22.5px;height:125.0px;background:#434343;"></div>
<div class="a" style="left:1413.5px;top:787.0px;width:18.5px;height:22.0px;background:#2c2c2c;"></div>
<svg class="a" style="left:1412px;top:788px;" width="20" height="20" viewBox="0 0 20 20"><g transform="translate(10,10) translate(0.8,0.5)"><circle cx="0" cy="0" r="5.8" fill="none" stroke="#8e8e8e" stroke-width="2.4"/><circle cx="0" cy="0" r="2.5" fill="none" stroke="#8e8e8e" stroke-width="1.5"/></g></svg>
<div class="a" style="left:1413.5px;top:811.0px;width:18.5px;height:22.0px;background:#2c2c2c;"></div>
<svg class="a" style="left:1412px;top:812px;" width="20" height="20" viewBox="0 0 20 20"><g transform="translate(10,10) translate(0.8,0.5)"><path d="M-8 9 L-2.5 -1.5 L0.5 -1.5 L7 -9 L3 2 L-0.5 2 Z" fill="#8e8e8e"/></g></svg>
<div class="a" style="left:1413.5px;top:835.0px;width:18.5px;height:22.0px;background:#2c2c2c;"></div>
<svg class="a" style="left:1412px;top:836px;" width="20" height="20" viewBox="0 0 20 20"><g transform="translate(10,10) translate(0.8,0.5)"><path d="M-5.5 -5.5 L5.5 5.5 M5.5 -5.5 L-5.5 5.5" stroke="#8e8e8e" stroke-width="3.2"/></g></svg>
<div class="a" style="left:1413.5px;top:859.0px;width:18.5px;height:22.0px;background:#2c2c2c;"></div>
<svg class="a" style="left:1412px;top:860px;" width="20" height="20" viewBox="0 0 20 20"><g transform="translate(10,10) translate(0.8,0.5)"><path d="M-7 -2 H0 L-3 -6 H1.5 L7 0 L1.5 6 H-3 L0 2 H-7 Z" fill="#8e8e8e"/></g></svg>
<div class="a" style="left:1413.5px;top:883.0px;width:18.5px;height:22.0px;background:#2c2c2c;"></div>
<svg class="a" style="left:1412px;top:884px;" width="20" height="20" viewBox="0 0 20 20"><g transform="translate(10,10) translate(0.8,0.5)"><circle cx="-1" cy="3" r="5.5" fill="#8e8e8e"/><path d="M1 -1 V-4 A3.5 3.5 0 0 1 8 -4 V-2" fill="none" stroke="#8e8e8e" stroke-width="2.2"/></g></svg>
<div class="a" style="left:1413.5px;top:907.0px;width:18.5px;height:0.5px;background:#2c2c2c;"></div>
<div class="a" style="left:1602.5px;top:827.0px;width:10.0px;height:16.0px;background:#5580bf;"></div>
<div class="a" style="left:1602.5px;top:852.0px;width:10.0px;height:16.0px;background:#5580bf;"></div>
<div class="a" style="left:1400.5px;top:827.0px;width:10.0px;height:16.0px;background:#5580bf;"></div>
<div class="a" style="left:1400.5px;top:852.0px;width:10.0px;height:16.0px;background:#5580bf;"></div>
<div class="a" style="left:1399.0px;top:910.0px;width:105.0px;height:12.0px;background:#282828;box-shadow:inset 0 0 0 1.5px #434343;"></div>
<div class="a" style="left:1509.5px;top:910.0px;width:104.5px;height:12.0px;background:#282828;box-shadow:inset 0 0 0 1.5px #434343;"></div>
</div>
<div class="a" style="left:1445.0px;top:795.0px;width:147.0px;height:105.0px;background:#1b1b1b;overflow:hidden"><svg width="147" height="105" style="position:absolute"><circle cx="73" cy="51" r="48" fill="none" stroke="#101010" stroke-width="1" stroke-dasharray="3 1"/></svg></div>
<div class="a" style="left:0;top:0;opacity:0.72">
<div class="a" style="left:1399.0px;top:924.5px;width:114.5px;height:23.5px;background:#262626;box-shadow:inset 0 0 0 2px #808080;"></div>
<div class="a" style="left:1516.5px;top:924.5px;width:97.5px;height:23.5px;background:#353535;box-shadow:inset 0 0 0 2px #808080;"></div>
<div class="a" style="left:1541.0px;top:924.5px;width:2.0px;height:23.5px;background:#808080;"></div>
<div class="a" style="left:1565.0px;top:924.5px;width:2.0px;height:23.5px;background:#808080;"></div>
<div class="a" style="left:1589.0px;top:924.5px;width:2.0px;height:23.5px;background:#808080;"></div>
</div>
<svg class="a" style="left:1522px;top:929px;" width="14" height="14" viewBox="0 0 14 14"><circle cx="7" cy="7" r="6" fill="#c98a3a"/></svg>
<svg class="a" style="left:1546px;top:929px;" width="14" height="14" viewBox="0 0 14 14"><circle cx="7" cy="7" r="6" fill="#7f63e8"/></svg>
<svg class="a" style="left:1570px;top:929px;" width="14" height="14" viewBox="0 0 14 14"><circle cx="7" cy="7" r="6" fill="#4a7ae0"/></svg>
<svg class="a" style="left:1591px;top:925px;" width="20" height="20" viewBox="0 0 20 20"><path d="M10 2 Q11 9 18 10 Q11 11 10 18 Q9 11 2 10 Q9 9 10 2 Z" fill="#5c5c5c"/></svg>
<div class="a t" style="top:928.4px;font-family:'Liberation Mono', monospace;font-size:19px;line-height:19px;color:#cfcfcf;left:1405.0px;">geo1</div>
<div class="a" style="left:1600.0px;top:843.5px;width:14.0px;height:7.0px;background:#000;"></div>
<div class="a" style="left:0;top:0;opacity:0.87">
<div class="a" style="left:1130.0px;top:827.0px;width:175.0px;height:94.0px;background:#676767;"></div>
<div class="a" style="left:1130.0px;top:827.0px;width:175.0px;height:2.0px;background:#b1b1b1;"></div>
<div class="a" style="left:1130.0px;top:919.0px;width:175.0px;height:2.0px;background:#b1b1b1;"></div>
<div class="a" style="left:1130.0px;top:827.0px;width:13.0px;height:94.0px;background:#5578af;"></div>
<div class="a" style="left:1143.0px;top:827.0px;width:21.0px;height:94.0px;background:#5b7eb8;"></div>
<div class="a" style="left:1130.0px;top:827.0px;width:34.0px;height:94.0px;box-shadow:inset 0 0 0 1.5px #6ab3ff;"></div>
<div class="a" style="left:1143.0px;top:827.0px;width:1.5px;height:94.0px;background:#6ab3ff;"></div>
<div class="a" style="left:1162.5px;top:827.0px;width:1.5px;height:94.0px;background:#6ab3ff;"></div>
<div class="a" style="left:1291.0px;top:827.0px;width:14.0px;height:94.0px;background:#a1a1a1;"></div>
<div class="a" style="left:1143.0px;top:849.5px;width:21.0px;height:1.5px;background:#6ab3ff;"></div>
<svg class="a" style="left:1143px;top:829px;" width="20" height="20" viewBox="0 0 20 20"><g transform="translate(10,10) translate(0.5,0.5)"><circle cx="0" cy="0" r="5.8" fill="none" stroke="#a8b8d4" stroke-width="2.4"/><circle cx="0" cy="0" r="2.5" fill="none" stroke="#a8b8d4" stroke-width="1.5"/></g></svg>
<div class="a" style="left:1143.0px;top:871.5px;width:21.0px;height:1.5px;background:#6ab3ff;"></div>
<svg class="a" style="left:1143px;top:851px;" width="20" height="20" viewBox="0 0 20 20"><g transform="translate(10,10) translate(0.5,0.5)"><path d="M-8 9 L-2.5 -1.5 L0.5 -1.5 L7 -9 L3 2 L-0.5 2 Z" fill="#a8b8d4"/></g></svg>
<div class="a" style="left:1143.0px;top:893.5px;width:21.0px;height:1.5px;background:#6ab3ff;"></div>
<svg class="a" style="left:1143px;top:873px;" width="20" height="20" viewBox="0 0 20 20"><g transform="translate(10,10) translate(0.5,0.5)"><path d="M-7 -2 H0 L-3 -6 H1.5 L7 0 L1.5 6 H-3 L0 2 H-7 Z" fill="#a8b8d4"/></g></svg>
<div class="a" style="left:1143.0px;top:915.5px;width:21.0px;height:1.5px;background:#6ab3ff;"></div>
<svg class="a" style="left:1143px;top:895px;" width="20" height="20" viewBox="0 0 20 20"><g transform="translate(10,10) translate(0.5,0.5)"><circle cx="-1" cy="3" r="5.5" fill="#a8b8d4"/><path d="M1 -1 V-4 A3.5 3.5 0 0 1 8 -4 V-2" fill="none" stroke="#a8b8d4" stroke-width="2.2"/></g></svg>
<div class="a" style="left:1293.5px;top:858.0px;width:10.0px;height:10.0px;background:#5b84c1;"></div>
<div class="a" style="left:1293.5px;top:879.0px;width:10.0px;height:12.0px;background:#5b84c1;"></div>
</div>
<div class="a" style="left:1174.0px;top:836.5px;width:109.5px;height:75.5px;background:#1b1b1b;overflow:hidden"><div class="a" style="left:50px;top:36px;width:6px;height:6px;background:#e6e6e6"></div></div>
<div class="a" style="left:0;top:0;opacity:0.72">
<div class="a" style="left:1130.0px;top:923.5px;width:50.5px;height:23.5px;background:#262626;box-shadow:inset 0 0 0 2px #808080;"></div>
<div class="a" style="left:1183.5px;top:923.5px;width:121.5px;height:23.5px;background:#353535;box-shadow:inset 0 0 0 2px #808080;"></div>
<div class="a" style="left:1208.0px;top:923.5px;width:2.0px;height:23.5px;background:#808080;"></div>
<div class="a" style="left:1232.0px;top:923.5px;width:2.0px;height:23.5px;background:#808080;"></div>
<div class="a" style="left:1256.0px;top:923.5px;width:2.0px;height:23.5px;background:#808080;"></div>
<div class="a" style="left:1280.0px;top:923.5px;width:2.0px;height:23.5px;background:#808080;"></div>
</div>
<svg class="a" style="left:1189px;top:928px;" width="14" height="14" viewBox="0 0 14 14"><circle cx="7" cy="7" r="6" fill="#2f4a48"/></svg>
<svg class="a" style="left:1213px;top:928px;" width="14" height="14" viewBox="0 0 14 14"><circle cx="7" cy="7" r="6" fill="#3b2e48"/></svg>
<svg class="a" style="left:1237px;top:928px;" width="14" height="14" viewBox="0 0 14 14"><circle cx="7" cy="7" r="6" fill="#7a5ee6"/></svg>
<svg class="a" style="left:1261px;top:928px;" width="14" height="14" viewBox="0 0 14 14"><circle cx="7" cy="7" r="6" fill="#25304a"/></svg>
<svg class="a" style="left:1282px;top:924px;" width="20" height="20" viewBox="0 0 20 20"><path d="M10 2 Q11 9 18 10 Q11 11 10 18 Q9 11 2 10 Q9 9 10 2 Z" fill="#5c5c5c"/></svg>
<div class="a t" style="top:927.4px;font-family:'Liberation Mono', monospace;font-size:19px;line-height:19px;color:#cfcfcf;left:1136.0px;">po1</div>
<div class="a" style="left:1130.0px;top:870.5px;width:13.0px;height:7.5px;background:#000;"></div>
<div class="a" style="left:0;top:0;opacity:0.87">
<div class="a" style="left:1702.0px;top:794.0px;width:175.0px;height:94.0px;background:#676767;"></div>
<div class="a" style="left:1702.0px;top:794.0px;width:175.0px;height:2.0px;background:#b1b1b1;"></div>
<div class="a" style="left:1702.0px;top:886.0px;width:175.0px;height:2.0px;background:#b1b1b1;"></div>
<div class="a" style="left:1702.0px;top:794.0px;width:13.0px;height:94.0px;background:#595289;"></div>
<div class="a" style="left:1715.0px;top:794.0px;width:21.0px;height:94.0px;background:#635b9a;"></div>
<div class="a" style="left:1702.0px;top:794.0px;width:34.0px;height:94.0px;box-shadow:inset 0 0 0 1.5px #9585f1;"></div>
<div class="a" style="left:1715.0px;top:794.0px;width:1.5px;height:94.0px;background:#9585f1;"></div>
<div class="a" style="left:1734.5px;top:794.0px;width:1.5px;height:94.0px;background:#9585f1;"></div>
<div class="a" style="left:1863.0px;top:794.0px;width:14.0px;height:94.0px;background:#a1a1a1;"></div>
<div class="a" style="left:1715.0px;top:816.5px;width:21.0px;height:1.5px;background:#9585f1;"></div>
<svg class="a" style="left:1715px;top:796px;" width="20" height="20" viewBox="0 0 20 20"><g transform="translate(10,10) translate(0.5,0.5)"><circle cx="0" cy="0" r="5.8" fill="none" stroke="#b9b1d9" stroke-width="2.4"/><circle cx="0" cy="0" r="2.5" fill="none" stroke="#b9b1d9" stroke-width="1.5"/></g></svg>
<div class="a" style="left:1715.0px;top:838.5px;width:21.0px;height:1.5px;background:#9585f1;"></div>
<svg class="a" style="left:1715px;top:818px;" width="20" height="20" viewBox="0 0 20 20"><g transform="translate(10,10) translate(0.5,0.5)"><path d="M-8 9 L-2.5 -1.5 L0.5 -1.5 L7 -9 L3 2 L-0.5 2 Z" fill="#b9b1d9"/></g></svg>
<div class="a" style="left:1715.0px;top:860.5px;width:21.0px;height:1.5px;background:#9585f1;"></div>
<svg class="a" style="left:1715px;top:840px;" width="20" height="20" viewBox="0 0 20 20"><g transform="translate(10,10) translate(0.5,0.5)"><path d="M-7 -2 H0 L-3 -6 H1.5 L7 0 L1.5 6 H-3 L0 2 H-7 Z" fill="#b9b1d9"/></g></svg>
<div class="a" style="left:1715.0px;top:882.5px;width:21.0px;height:1.5px;background:#9585f1;"></div>
<svg class="a" style="left:1715px;top:862px;" width="20" height="20" viewBox="0 0 20 20"><g transform="translate(10,10) translate(0.5,0.5)"><circle cx="-1" cy="3" r="5.5" fill="#b9b1d9"/><path d="M1 -1 V-4 A3.5 3.5 0 0 1 8 -4 V-2" fill="none" stroke="#b9b1d9" stroke-width="2.2"/></g></svg>
<div class="a" style="left:1865.5px;top:825.0px;width:10.0px;height:11.0px;background:#635b9a;"></div>
<div class="a" style="left:1865.5px;top:845.5px;width:10.0px;height:11.0px;background:#635b9a;"></div>
</div>
<div class="a" style="left:1745.5px;top:804.0px;width:110.0px;height:74.0px;background:#000;overflow:hidden"><div class="a" style="left:0;top:0;width:110px;height:74px;background:#000"></div><div class="a" style="left:0;top:0;width:110px;height:6px;background:#1b1b1b"></div><div class="a" style="left:0;top:68px;width:110px;height:6px;background:#1b1b1b"></div><svg width="110" height="74" style="position:absolute"><circle cx="55" cy="37" r="26" fill="none" stroke="#333" stroke-dasharray="1.5 3"/></svg></div>
<div class="a" style="left:0;top:0;opacity:0.72">
<div class="a" style="left:1702.0px;top:890.5px;width:122.5px;height:23.5px;background:#262626;box-shadow:inset 0 0 0 2px #808080;"></div>
<div class="a" style="left:1827.5px;top:890.5px;width:49.5px;height:23.5px;background:#353535;box-shadow:inset 0 0 0 2px #808080;"></div>
<div class="a" style="left:1852.0px;top:890.5px;width:2.0px;height:23.5px;background:#808080;"></div>
</div>
<svg class="a" style="left:1833px;top:895px;" width="14" height="14" viewBox="0 0 14 14"><circle cx="7" cy="7" r="6" fill="#2a3a5e"/></svg>
<svg class="a" style="left:1854px;top:891px;" width="20" height="20" viewBox="0 0 20 20"><path d="M10 2 Q11 9 18 10 Q11 11 10 18 Q9 11 2 10 Q9 9 10 2 Z" fill="#5c5c5c"/></svg>
<div class="a t" style="top:894.4px;font-family:'Liberation Mono', monospace;font-size:19px;line-height:19px;color:#cfcfcf;left:1708.0px;">render1</div>
<div class="a" style="left:1741.0px;top:798.0px;width:6.0px;height:6.0px;background:#8a8a8a;"></div>
<div class="a" style="left:0;top:0;opacity:0.87">
<div class="a" style="left:1433.5px;top:995.0px;width:174.0px;height:94.0px;background:#676767;"></div>
<div class="a" style="left:1433.5px;top:995.0px;width:174.0px;height:2.0px;background:#b1b1b1;"></div>
<div class="a" style="left:1433.5px;top:1087.0px;width:174.0px;height:2.0px;background:#b1b1b1;"></div>
<div class="a" style="left:1433.5px;top:995.0px;width:13.0px;height:94.0px;background:#9f935c;"></div>
<div class="a" style="left:1446.5px;top:995.0px;width:29.5px;height:94.0px;background:#a89f63;"></div>
<div class="a" style="left:1433.5px;top:995.0px;width:42.5px;height:94.0px;box-shadow:inset 0 0 0 1.5px #f8e683;"></div>
<div class="a" style="left:1446.5px;top:995.0px;width:1.5px;height:94.0px;background:#f8e683;"></div>
<div class="a" style="left:1474.5px;top:995.0px;width:1.5px;height:94.0px;background:#f8e683;"></div>
<div class="a" style="left:1593.5px;top:995.0px;width:14.0px;height:94.0px;background:#a1a1a1;"></div>
<div class="a" style="left:1446.5px;top:1025.5px;width:29.5px;height:1.5px;background:#f8e683;"></div>
<svg class="a" style="left:1451px;top:1001px;" width="20" height="20" viewBox="0 0 20 20"><g transform="translate(10,10) translate(0.2,0.5)"><circle cx="0" cy="0" r="5.8" fill="none" stroke="#d8d0a8" stroke-width="2.4"/><circle cx="0" cy="0" r="2.5" fill="none" stroke="#d8d0a8" stroke-width="1.5"/></g></svg>
<div class="a" style="left:1446.5px;top:1055.5px;width:29.5px;height:1.5px;background:#f8e683;"></div>
<svg class="a" style="left:1451px;top:1031px;" width="20" height="20" viewBox="0 0 20 20"><g transform="translate(10,10) translate(0.2,0.5)"><path d="M-8 9 L-2.5 -1.5 L0.5 -1.5 L7 -9 L3 2 L-0.5 2 Z" fill="#d8d0a8"/></g></svg>
<div class="a" style="left:1446.5px;top:1085.5px;width:29.5px;height:1.5px;background:#f8e683;"></div>
<svg class="a" style="left:1451px;top:1061px;" width="20" height="20" viewBox="0 0 20 20"><g transform="translate(10,10) translate(0.2,0.5)"><circle cx="-1" cy="3" r="5.5" fill="#d8d0a8"/><path d="M1 -1 V-4 A3.5 3.5 0 0 1 8 -4 V-2" fill="none" stroke="#d8d0a8" stroke-width="2.2"/></g></svg>
<div class="a" style="left:1596.0px;top:1027.0px;width:10.0px;height:11.0px;background:#a49a5c;"></div>
<div class="a" style="left:1596.0px;top:1046.0px;width:10.0px;height:12.0px;background:#a49a5c;"></div>
</div>
<div class="a" style="left:1485.0px;top:1004.7px;width:101.0px;height:74.7px;background:#1b1b1b;overflow:hidden"><svg width="101" height="75" style="position:absolute"><defs><linearGradient id="tor" x1="0" y1="0" x2="0" y2="1"><stop offset="0" stop-color="#121212"/><stop offset="0.55" stop-color="#141414"/><stop offset="1" stop-color="#171717"/></linearGradient></defs><ellipse cx="50.4" cy="43.7" rx="37" ry="24.3" fill="url(#tor)"/><ellipse cx="50.4" cy="34" rx="12" ry="5.5" fill="#0d0d0d"/></svg></div>
<div class="a" style="left:0;top:0;opacity:0.72">
<div class="a" style="left:1433.5px;top:1091.5px;width:145.5px;height:23.5px;background:#262626;box-shadow:inset 0 0 0 2px #808080;"></div>
<div class="a" style="left:1582.0px;top:1091.5px;width:25.5px;height:23.5px;background:#353535;box-shadow:inset 0 0 0 2px #808080;"></div>
</div>
<svg class="a" style="left:1585px;top:1092px;" width="20" height="20" viewBox="0 0 20 20"><path d="M10 2 Q11 9 18 10 Q11 11 10 18 Q9 11 2 10 Q9 9 10 2 Z" fill="#5c5c5c"/></svg>
<div class="a t" style="top:1095.4px;font-family:'Liberation Mono', monospace;font-size:19px;line-height:19px;color:#cfcfcf;left:1439.5px;">pbr1</div>
<div class="a" style="left:1594.0px;top:1039.0px;width:14.0px;height:6.0px;background:#000;"></div>
<div class="a" style="left:0;top:0;opacity:0.87">
<div class="a" style="left:562.0px;top:1076.0px;width:174.0px;height:117.0px;background:#676767;"></div>
<div class="a" style="left:562.0px;top:1076.0px;width:174.0px;height:2.0px;background:#b1b1b1;"></div>
<div class="a" style="left:562.0px;top:1191.0px;width:174.0px;height:2.0px;background:#b1b1b1;"></div>
<div class="a" style="left:562.0px;top:1076.0px;width:13.0px;height:117.0px;background:#595289;"></div>
<div class="a" style="left:575.0px;top:1076.0px;width:21.0px;height:117.0px;background:#635b9a;"></div>
<div class="a" style="left:562.0px;top:1076.0px;width:34.0px;height:117.0px;box-shadow:inset 0 0 0 1.5px #9585f1;"></div>
<div class="a" style="left:575.0px;top:1076.0px;width:1.5px;height:117.0px;background:#9585f1;"></div>
<div class="a" style="left:594.5px;top:1076.0px;width:1.5px;height:117.0px;background:#9585f1;"></div>
<div class="a" style="left:722.0px;top:1076.0px;width:14.0px;height:117.0px;background:#a1a1a1;"></div>
<div class="a" style="left:575.0px;top:1104.2px;width:21.0px;height:1.5px;background:#9585f1;"></div>
<svg class="a" style="left:575px;top:1081px;" width="20" height="20" viewBox="0 0 20 20"><g transform="translate(10,10) translate(0.5,0.3)"><circle cx="0" cy="0" r="5.8" fill="none" stroke="#b9b1d9" stroke-width="2.4"/><circle cx="0" cy="0" r="2.5" fill="none" stroke="#b9b1d9" stroke-width="1.5"/></g></svg>
<div class="a" style="left:575.0px;top:1131.9px;width:21.0px;height:1.5px;background:#9585f1;"></div>
<svg class="a" style="left:575px;top:1109px;" width="20" height="20" viewBox="0 0 20 20"><g transform="translate(10,10) translate(0.5,0.0)"><path d="M-8 9 L-2.5 -1.5 L0.5 -1.5 L7 -9 L3 2 L-0.5 2 Z" fill="#b9b1d9"/></g></svg>
<div class="a" style="left:575.0px;top:1159.6px;width:21.0px;height:1.5px;background:#9585f1;"></div>
<svg class="a" style="left:575px;top:1136px;" width="20" height="20" viewBox="0 0 20 20"><g transform="translate(10,10) translate(0.5,0.8)"><path d="M-7 -2 H0 L-3 -6 H1.5 L7 0 L1.5 6 H-3 L0 2 H-7 Z" fill="#b9b1d9"/></g></svg>
<div class="a" style="left:575.0px;top:1187.3px;width:21.0px;height:1.5px;background:#9585f1;"></div>
<svg class="a" style="left:575px;top:1164px;" width="20" height="20" viewBox="0 0 20 20"><g transform="translate(10,10) translate(0.5,0.5)"><circle cx="-1" cy="3" r="5.5" fill="#b9b1d9"/><path d="M1 -1 V-4 A3.5 3.5 0 0 1 8 -4 V-2" fill="none" stroke="#b9b1d9" stroke-width="2.2"/></g></svg>
<div class="a" style="left:724.5px;top:1115.0px;width:10.0px;height:14.0px;background:#635b9a;"></div>
<div class="a" style="left:724.5px;top:1139.0px;width:10.0px;height:15.0px;background:#635b9a;"></div>
</div>
<div class="a" style="left:608.0px;top:1086.0px;width:106.0px;height:97.5px;background:#1b1b1b;overflow:hidden"><svg width="84" height="98" style="position:absolute"><rect width="84" height="98" fill="#000" filter="url(#nzf)"/></svg></div>
<div class="a" style="left:0;top:0;opacity:0.72">
<div class="a" style="left:562.0px;top:1195.5px;width:121.5px;height:23.5px;background:#262626;box-shadow:inset 0 0 0 2px #808080;"></div>
<div class="a" style="left:686.5px;top:1195.5px;width:49.5px;height:23.5px;background:#353535;box-shadow:inset 0 0 0 2px #808080;"></div>
<div class="a" style="left:711.0px;top:1195.5px;width:2.0px;height:23.5px;background:#808080;"></div>
</div>
<svg class="a" style="left:692px;top:1200px;" width="14" height="14" viewBox="0 0 14 14"><circle cx="7" cy="7" r="6" fill="#2a3a5e"/></svg>
<svg class="a" style="left:713px;top:1196px;" width="20" height="20" viewBox="0 0 20 20"><path d="M10 2 Q11 9 18 10 Q11 11 10 18 Q9 11 2 10 Q9 9 10 2 Z" fill="#5c5c5c"/></svg>
<div class="a t" style="top:1199.4px;font-family:'Liberation Mono', monospace;font-size:19px;line-height:19px;color:#cfcfcf;left:568.0px;">feedback1</div>
<div class="a" style="left:0;top:0;opacity:0.87">
<div class="a" style="left:895.0px;top:1130.0px;width:175.0px;height:94.5px;background:#676767;"></div>
<div class="a" style="left:895.0px;top:1130.0px;width:175.0px;height:2.0px;background:#b1b1b1;"></div>
<div class="a" style="left:895.0px;top:1222.5px;width:175.0px;height:2.0px;background:#b1b1b1;"></div>
<div class="a" style="left:895.0px;top:1130.0px;width:13.0px;height:94.5px;background:#595289;"></div>
<div class="a" style="left:908.0px;top:1130.0px;width:21.0px;height:94.5px;background:#635b9a;"></div>
<div class="a" style="left:895.0px;top:1130.0px;width:34.0px;height:94.5px;box-shadow:inset 0 0 0 1.5px #9585f1;"></div>
<div class="a" style="left:908.0px;top:1130.0px;width:1.5px;height:94.5px;background:#9585f1;"></div>
<div class="a" style="left:927.5px;top:1130.0px;width:1.5px;height:94.5px;background:#9585f1;"></div>
<div class="a" style="left:1056.0px;top:1130.0px;width:14.0px;height:94.5px;background:#a1a1a1;"></div>
<div class="a" style="left:908.0px;top:1152.5px;width:21.0px;height:1.5px;background:#9585f1;"></div>
<svg class="a" style="left:908px;top:1132px;" width="20" height="20" viewBox="0 0 20 20"><g transform="translate(10,10) translate(0.5,0.5)"><circle cx="0" cy="0" r="5.8" fill="none" stroke="#b9b1d9" stroke-width="2.4"/><circle cx="0" cy="0" r="2.5" fill="none" stroke="#b9b1d9" stroke-width="1.5"/></g></svg>
<div class="a" style="left:908.0px;top:1174.5px;width:21.0px;height:1.5px;background:#9585f1;"></div>
<svg class="a" style="left:908px;top:1154px;" width="20" height="20" viewBox="0 0 20 20"><g transform="translate(10,10) translate(0.5,0.5)"><path d="M-8 9 L-2.5 -1.5 L0.5 -1.5 L7 -9 L3 2 L-0.5 2 Z" fill="#b9b1d9"/></g></svg>
<div class="a" style="left:908.0px;top:1196.5px;width:21.0px;height:1.5px;background:#9585f1;"></div>
<svg class="a" style="left:908px;top:1176px;" width="20" height="20" viewBox="0 0 20 20"><g transform="translate(10,10) translate(0.5,0.5)"><path d="M-7 -2 H0 L-3 -6 H1.5 L7 0 L1.5 6 H-3 L0 2 H-7 Z" fill="#b9b1d9"/></g></svg>
<div class="a" style="left:908.0px;top:1218.5px;width:21.0px;height:1.5px;background:#9585f1;"></div>
<svg class="a" style="left:908px;top:1198px;" width="20" height="20" viewBox="0 0 20 20"><g transform="translate(10,10) translate(0.5,0.5)"><circle cx="-1" cy="3" r="5.5" fill="#b9b1d9"/><path d="M1 -1 V-4 A3.5 3.5 0 0 1 8 -4 V-2" fill="none" stroke="#b9b1d9" stroke-width="2.2"/></g></svg>
<div class="a" style="left:1058.5px;top:1161.0px;width:10.0px;height:10.0px;background:#7a6cca;"></div>
<div class="a" style="left:1058.5px;top:1181.0px;width:10.0px;height:12.0px;background:#7a6cca;"></div>
<div class="a" style="left:896.5px;top:1170.6px;width:10.0px;height:10.5px;background:#7a6cca;"></div>
</div>
<div class="a" style="left:939.0px;top:1139.7px;width:109.0px;height:75.3px;background:#1b1b1b;overflow:hidden"><svg width="76" height="76" style="position:absolute;left:16.5px"><rect width="76" height="76" fill="#000" filter="url(#nzf)"/></svg></div>
<div class="a" style="left:0;top:0;opacity:0.72">
<div class="a" style="left:895.0px;top:1227.0px;width:122.5px;height:23.5px;background:#262626;box-shadow:inset 0 0 0 2px #808080;"></div>
<div class="a" style="left:1020.5px;top:1227.0px;width:49.5px;height:23.5px;background:#353535;box-shadow:inset 0 0 0 2px #808080;"></div>
<div class="a" style="left:1045.0px;top:1227.0px;width:2.0px;height:23.5px;background:#808080;"></div>
</div>
<svg class="a" style="left:1026px;top:1232px;" width="14" height="14" viewBox="0 0 14 14"><circle cx="7" cy="7" r="6" fill="#2a3a5e"/></svg>
<svg class="a" style="left:1047px;top:1228px;" width="20" height="20" viewBox="0 0 20 20"><path d="M10 2 Q11 9 18 10 Q11 11 10 18 Q9 11 2 10 Q9 9 10 2 Z" fill="#5c5c5c"/></svg>
<div class="a t" style="top:1230.9px;font-family:'Liberation Mono', monospace;font-size:19px;line-height:19px;color:#cfcfcf;left:901.0px;">transform1</div>
<div class="a" style="left:0;top:0;opacity:0.87">
<div class="a" style="left:1265.3px;top:1231.6px;width:173.5px;height:94.0px;background:#676767;"></div>
<div class="a" style="left:1265.3px;top:1231.6px;width:173.5px;height:2.0px;background:#b1b1b1;"></div>
<div class="a" style="left:1265.3px;top:1323.6px;width:173.5px;height:2.0px;background:#b1b1b1;"></div>
<div class="a" style="left:1265.3px;top:1231.6px;width:13.0px;height:94.0px;background:#595289;"></div>
<div class="a" style="left:1278.3px;top:1231.6px;width:21.0px;height:94.0px;background:#635b9a;"></div>
<div class="a" style="left:1265.3px;top:1231.6px;width:34.0px;height:94.0px;box-shadow:inset 0 0 0 1.5px #9585f1;"></div>
<div class="a" style="left:1278.3px;top:1231.6px;width:1.5px;height:94.0px;background:#9585f1;"></div>
<div class="a" style="left:1297.8px;top:1231.6px;width:1.5px;height:94.0px;background:#9585f1;"></div>
<div class="a" style="left:1424.8px;top:1231.6px;width:14.0px;height:94.0px;background:#a1a1a1;"></div>
<div class="a" style="left:1278.3px;top:1254.1px;width:21.0px;height:1.5px;background:#9585f1;"></div>
<svg class="a" style="left:1278px;top:1234px;" width="20" height="20" viewBox="0 0 20 20"><g transform="translate(10,10) translate(0.8,0.1)"><circle cx="0" cy="0" r="5.8" fill="none" stroke="#b9b1d9" stroke-width="2.4"/><circle cx="0" cy="0" r="2.5" fill="none" stroke="#b9b1d9" stroke-width="1.5"/></g></svg>
<div class="a" style="left:1278.3px;top:1276.1px;width:21.0px;height:1.5px;background:#9585f1;"></div>
<svg class="a" style="left:1278px;top:1256px;" width="20" height="20" viewBox="0 0 20 20"><g transform="translate(10,10) translate(0.8,0.1)"><path d="M-8 9 L-2.5 -1.5 L0.5 -1.5 L7 -9 L3 2 L-0.5 2 Z" fill="#b9b1d9"/></g></svg>
<div class="a" style="left:1278.3px;top:1298.1px;width:21.0px;height:1.5px;background:#9585f1;"></div>
<svg class="a" style="left:1278px;top:1278px;" width="20" height="20" viewBox="0 0 20 20"><g transform="translate(10,10) translate(0.8,0.1)"><path d="M-7 -2 H0 L-3 -6 H1.5 L7 0 L1.5 6 H-3 L0 2 H-7 Z" fill="#b9b1d9"/></g></svg>
<div class="a" style="left:1278.3px;top:1320.1px;width:21.0px;height:1.5px;background:#9585f1;"></div>
<svg class="a" style="left:1278px;top:1300px;" width="20" height="20" viewBox="0 0 20 20"><g transform="translate(10,10) translate(0.8,0.1)"><circle cx="-1" cy="3" r="5.5" fill="#b9b1d9"/><path d="M1 -1 V-4 A3.5 3.5 0 0 1 8 -4 V-2" fill="none" stroke="#b9b1d9" stroke-width="2.2"/></g></svg>
<div class="a" style="left:1427.3px;top:1262.0px;width:10.0px;height:10.0px;background:#6d62af;"></div>
<div class="a" style="left:1427.3px;top:1282.0px;width:10.0px;height:12.0px;background:#6d62af;"></div>
<div class="a" style="left:1266.8px;top:1272.0px;width:10.0px;height:10.0px;background:#6d62af;"></div>
</div>
<div class="a" style="left:1309.0px;top:1241.0px;width:108.0px;height:75.0px;background:#1b1b1b;overflow:hidden"><svg width="75" height="75" style="position:absolute;left:17px"><rect width="75" height="75" fill="#000" filter="url(#nzf)"/></svg></div>
<div class="a" style="left:0;top:0;opacity:0.72">
<div class="a" style="left:1265.3px;top:1328.1px;width:121.0px;height:23.5px;background:#262626;box-shadow:inset 0 0 0 2px #808080;"></div>
<div class="a" style="left:1389.3px;top:1328.1px;width:49.5px;height:23.5px;background:#353535;box-shadow:inset 0 0 0 2px #808080;"></div>
<div class="a" style="left:1413.8px;top:1328.1px;width:2.0px;height:23.5px;background:#808080;"></div>
</div>
<svg class="a" style="left:1395px;top:1333px;" width="14" height="14" viewBox="0 0 14 14"><circle cx="7" cy="7" r="6" fill="#2a3a5e"/></svg>
<svg class="a" style="left:1416px;top:1329px;" width="20" height="20" viewBox="0 0 20 20"><path d="M10 2 Q11 9 18 10 Q11 11 10 18 Q9 11 2 10 Q9 9 10 2 Z" fill="#5c5c5c"/></svg>
<div class="a t" style="top:1332.0px;font-family:'Liberation Mono', monospace;font-size:19px;line-height:19px;color:#cfcfcf;left:1271.3px;">fedend</div>
<div class="a" style="left:0;top:0;opacity:0.87">
<div class="a" style="left:1668.0px;top:1264.0px;width:175.0px;height:95.0px;background:#676767;"></div>
<div class="a" style="left:1668.0px;top:1264.0px;width:175.0px;height:2.0px;background:#b1b1b1;"></div>
<div class="a" style="left:1668.0px;top:1357.0px;width:175.0px;height:2.0px;background:#b1b1b1;"></div>
<div class="a" style="left:1668.0px;top:1264.0px;width:13.0px;height:95.0px;background:#595289;"></div>
<div class="a" style="left:1681.0px;top:1264.0px;width:21.0px;height:95.0px;background:#635b9a;"></div>
<div class="a" style="left:1668.0px;top:1264.0px;width:34.0px;height:95.0px;box-shadow:inset 0 0 0 1.5px #9585f1;"></div>
<div class="a" style="left:1681.0px;top:1264.0px;width:1.5px;height:95.0px;background:#9585f1;"></div>
<div class="a" style="left:1700.5px;top:1264.0px;width:1.5px;height:95.0px;background:#9585f1;"></div>
<div class="a" style="left:1829.0px;top:1264.0px;width:14.0px;height:95.0px;background:#a1a1a1;"></div>
<div class="a" style="left:1681.0px;top:1286.5px;width:21.0px;height:1.5px;background:#9585f1;"></div>
<svg class="a" style="left:1681px;top:1266px;" width="20" height="20" viewBox="0 0 20 20"><g transform="translate(10,10) translate(0.5,0.5)"><circle cx="0" cy="0" r="5.8" fill="none" stroke="#b9b1d9" stroke-width="2.4"/><circle cx="0" cy="0" r="2.5" fill="none" stroke="#b9b1d9" stroke-width="1.5"/></g></svg>
<div class="a" style="left:1681.0px;top:1308.5px;width:21.0px;height:1.5px;background:#9585f1;"></div>
<svg class="a" style="left:1681px;top:1288px;" width="20" height="20" viewBox="0 0 20 20"><g transform="translate(10,10) translate(0.5,0.5)"><path d="M-8 9 L-2.5 -1.5 L0.5 -1.5 L7 -9 L3 2 L-0.5 2 Z" fill="#b9b1d9"/></g></svg>
<div class="a" style="left:1681.0px;top:1330.5px;width:21.0px;height:1.5px;background:#9585f1;"></div>
<svg class="a" style="left:1681px;top:1310px;" width="20" height="20" viewBox="0 0 20 20"><g transform="translate(10,10) translate(0.5,0.5)"><path d="M-7 -2 H0 L-3 -6 H1.5 L7 0 L1.5 6 H-3 L0 2 H-7 Z" fill="#b9b1d9"/></g></svg>
<div class="a" style="left:1681.0px;top:1352.5px;width:21.0px;height:1.5px;background:#9585f1;"></div>
<svg class="a" style="left:1681px;top:1332px;" width="20" height="20" viewBox="0 0 20 20"><g transform="translate(10,10) translate(0.5,0.5)"><circle cx="-1" cy="3" r="5.5" fill="#b9b1d9"/><path d="M1 -1 V-4 A3.5 3.5 0 0 1 8 -4 V-2" fill="none" stroke="#b9b1d9" stroke-width="2.2"/></g></svg>
<div class="a" style="left:1831.5px;top:1296.0px;width:10.0px;height:10.0px;background:#6d62af;"></div>
<div class="a" style="left:1831.5px;top:1316.0px;width:10.0px;height:12.0px;background:#6d62af;"></div>
<div class="a" style="left:1669.5px;top:1304.0px;width:10.0px;height:11.0px;background:#6d62af;"></div>
</div>
<div class="a" style="left:1712.0px;top:1273.6px;width:109.0px;height:74.8px;background:#1b1b1b;overflow:hidden"><svg width="76" height="75" style="position:absolute;left:16.5px"><rect width="76" height="75" fill="#000" filter="url(#nzf)"/></svg></div>
<div class="a" style="left:0;top:0;opacity:0.72">
<div class="a" style="left:1668.0px;top:1361.5px;width:122.5px;height:23.5px;background:#262626;box-shadow:inset 0 0 0 2px #808080;"></div>
<div class="a" style="left:1793.5px;top:1361.5px;width:49.5px;height:23.5px;background:#353535;box-shadow:inset 0 0 0 2px #808080;"></div>
<div class="a" style="left:1818.0px;top:1361.5px;width:2.0px;height:23.5px;background:#808080;"></div>
</div>
<svg class="a" style="left:1799px;top:1366px;" width="14" height="14" viewBox="0 0 14 14"><circle cx="7" cy="7" r="6" fill="#2a3a5e"/></svg>
<svg class="a" style="left:1820px;top:1362px;" width="20" height="20" viewBox="0 0 20 20"><path d="M10 2 Q11 9 18 10 Q11 11 10 18 Q9 11 2 10 Q9 9 10 2 Z" fill="#5c5c5c"/></svg>
<div class="a t" style="top:1365.4px;font-family:'Liberation Mono', monospace;font-size:19px;line-height:19px;color:#cfcfcf;left:1674.0px;">pos</div>
<div class="a" style="left:1829.0px;top:1306.0px;width:14.0px;height:10.0px;background:#000;"></div>
<svg class="a" style="left:0;top:0" width="0" height="0"><defs><filter id="nzf" x="0" y="0" width="100%" height="100%" filterUnits="objectBoundingBox" color-interpolation-filters="sRGB"><feTurbulence type="fractalNoise" baseFrequency="0.85" numOctaves="2" seed="4"/><feColorMatrix type="matrix" values="1.8 -0.8 0 0 0  -0.8 1.8 0 0 0  0 0 0 0 0  0 0 0 0 1"/><feComponentTransfer><feFuncR type="discrete" tableValues="0 0 0 0 0 0 0 0 0 0 0 0 0 0.85 0.85 0.85 0.85 0.85 0.85 0.85"/><feFuncG type="discrete" tableValues="0 0 0 0 0 0 0 0 0 0 0 0 0 0.78 0.78 0.78 0.78 0.78 0.78 0.78"/><feFuncB type="discrete" tableValues="0 0.08"/><feFuncA type="linear" slope="0" intercept="1"/></feComponentTransfer></filter><pattern id="noisepat" patternUnits="userSpaceOnUse" width="120" height="120"><rect width="120" height="120" fill="#000" filter="url(#nzf)"/></pattern></defs></svg>
<svg class="a" style="left:578px;top:146px;pointer-events:none" width="2336" height="1316" viewBox="0 0 2336 1316"><path d="M994.0 198.0 L892.4 412.0" stroke="#7d8ba0" stroke-width="1.2" fill="none"/><path d="M994.0 198.0 L1096.5 412.0" stroke="#7d8ba0" stroke-width="1.2" fill="none"/><path d="M924.1 322.3 L942.0 330.3 L924.1 343.3 Z" fill="#4f5a68"/><path d="M1064.7 322.3 L1046.8 330.3 L1064.7 343.3 Z" fill="#4f5a68"/><path d="M919.0 519.0 L1168.0 683.0" stroke="#7d8ba0" stroke-width="1.2" fill="none"/><path d="M1019.0 597.0 L1026.0 581.5 L1041.0 598.0 Z" fill="#4f5a68"/><path d="M1141.0 518.0 L1192.0 657.0" stroke="#7d8ba0" stroke-width="1.2" fill="none"/><path d="M1160.0 587.0 L1177.0 586.0 L1174.0 607.0 Z" fill="#4f5a68"/><path d="M1035.0 713.5 L1124.0 711.0" stroke="#7d8ba0" stroke-width="1.2" fill="none"/><path d="M1035.0 720.0 L1124.0 714.0" stroke="#7d8ba0" stroke-width="1.2" fill="none"/><path d="M1053.0 703.5 L1071.5 713.5 L1053.0 723.0 Z" fill="#4f5a68"/><path d="M1072.0 703.5 L1090.5 713.5 L1072.0 723.0 Z" fill="#4f5a68"/><path d="M1299.0 695.4 L1422.0 695.4" stroke="#7a6cd0" stroke-width="1.2" fill="none"/><path d="M937.0 858.0 L931.0 754.0" stroke="#7d8ba0" stroke-width="1.2" fill="none"/><path d="M925.5 827.5 L935.5 807.8 L945.5 827.5 Z" fill="#4f5a68"/><path d="M947.0 754.0 L1144.0 1119.0" stroke="#7d8ba0" stroke-width="1.2" fill="none"/><path d="M1031.0 912.0 L1050.0 922.0 L1031.0 934.0 Z" fill="#4f5a68"/><path d="M727.0 729.0 C774.0 729.0 774.0 702.0 821.0 702.0" stroke="#5a8ee8" stroke-width="1.3" fill="none"/><path d="M705.5 738.0 L867.0 729.0" stroke="#6a90c8" stroke-width="1.2" fill="none"/><path d="M158.0 990.0 C237.5 990.0 237.5 1029.0 317.0 1029.0" stroke="#7466c8" stroke-width="1.2" fill="none"/><path d="M136.0 1016.0 L730.0 1137.0" stroke="#5f6d82" stroke-width="1.0" fill="none"/><path d="M492.0 1031.0 C589.7 1031.0 589.7 1134.0 687.3 1134.0" stroke="#7466c8" stroke-width="1.2" fill="none"/><path d="M861.0 1134.0 C975.5 1134.0 975.5 1165.0 1090.0 1165.0" stroke="#7466c8" stroke-width="1.2" fill="none"/><path d="M1.0 1035.4 L1422.0 1035.4" stroke="#3a3278" stroke-width="1.0" fill="none"/><path d="M1.0 1037.4 L1422.0 1037.4" stroke="#241f50" stroke-width="1.0" fill="none"/></svg>
</div></div>
<div class="a" style="left:2000.0px;top:148.0px;width:914.0px;height:94.0px;background:#252525;"></div>
<div class="a" style="left:2081.7px;top:154.0px;width:824.1px;height:40.0px;background:#2e2e2e;"></div>
<div class="a t" style="top:163.4px;font-family:'Liberation Sans', sans-serif;font-size:22px;line-height:22px;color:#e6e6e6;font-weight:700;letter-spacing:0.8px;left:2009.6px;">Light</div>
<div class="a t" style="top:165.6px;font-family:'Liberation Mono', monospace;font-size:24px;line-height:24px;color:#d0d0d0;left:2090.0px;">light1</div>
<svg class="a" style="left:2008px;top:198px;" width="120" height="40" viewBox="0 0 120 40"><text x="2" y="34" font-family="Liberation Sans" font-weight="700" font-size="32" fill="#cfcfcf">?</text><rect x="38" y="2" width="36" height="36" fill="#4a78b0"/><path d="M38 22 Q56 14 74 22 V38 H38 Z" fill="#f0cc60"/><text x="46" y="34" font-family="Liberation Sans" font-weight="700" font-size="32" fill="#fff" stroke="#222" stroke-width="1.5">?</text><rect x="95" y="13" width="9" height="24" fill="#dcdcdc"/><rect x="95" y="2" width="9" height="8" fill="#dcdcdc"/></svg>
<svg class="a" style="left:2648px;top:196px;" width="262" height="44" viewBox="0 0 262 44"><path d="M8 38 L8 30 L26 10 L32 16 L14 36 Z" fill="#6a6a6a"/><ellipse cx="61" cy="21" rx="16" ry="9" fill="#6a6a6a"/><path d="M50 27 L47 34 L57 29 Z" fill="#6a6a6a"/><path d="M94 34 L104 12 L120 20 L110 42 Z" fill="none" stroke="#cfcfcf" stroke-width="2"/><path d="M105 10 L111 6 L117 14" fill="none" stroke="#cfcfcf" stroke-width="2"/><circle cx="150" cy="22" r="17" fill="#fff"/><path d="M142 12 Q150 6 158 12 V20 H146 V26 H139 Q136 18 142 12 Z" fill="#3c72a8"/><path d="M158 32 Q150 38 142 32 V24 H154 V18 H161 Q164 26 158 32 Z" fill="#f0c850"/><path d="M192 8 V36 M178 22 H206" stroke="#dcdcdc" stroke-width="5"/><circle cx="241" cy="22" r="16" fill="none" stroke="#cfcfcf" stroke-width="3"/><circle cx="241" cy="22" r="9" fill="none" stroke="#cfcfcf" stroke-width="3"/><circle cx="241" cy="22" r="3.5" fill="#cfcfcf"/></svg>
<div class="a" style="left:2000.0px;top:242.0px;width:914.0px;height:942.0px;background:#3f3f3f;"></div>
<div class="a" style="left:2910.5px;top:148.0px;width:3.5px;height:1036.0px;background:#585858;"></div>
<div class="a t" style="top:267.7px;font-family:'Liberation Sans', sans-serif;font-size:24px;line-height:24px;color:#c2c2c2;letter-spacing:1.1px;left:2019.0px;">Xform</div>
<div class="a" style="left:2114.8px;top:260px;width:114px;height:40px;overflow:hidden;-webkit-mask-image:linear-gradient(90deg,#000 85%,transparent)"><div class="a t" style="left:0;top:7.7px;font-family:'Liberation Sans', sans-serif;font-size:24px;line-height:24px;letter-spacing:1.1px;color:#c2c2c2">Pre-Xform</div></div>
<div class="a t" style="top:267.7px;font-family:'Liberation Sans', sans-serif;font-size:24px;line-height:24px;color:#c2c2c2;letter-spacing:1.1px;left:2236.9px;">Light</div>
<div class="a t" style="top:267.7px;font-family:'Liberation Sans', sans-serif;font-size:24px;line-height:24px;color:#c2c2c2;letter-spacing:1.1px;left:2319.8px;">Shadows</div>
<div class="a t" style="top:267.7px;font-family:'Liberation Sans', sans-serif;font-size:24px;line-height:24px;color:#c2c2c2;letter-spacing:1.1px;left:2442.4px;">View</div>
<div class="a t" style="top:267.7px;font-family:'Liberation Sans', sans-serif;font-size:24px;line-height:24px;color:#c2c2c2;letter-spacing:1.1px;left:2523.0px;">Render</div>
<div class="a" style="left:2631px;top:260px;width:110px;height:40px;overflow:hidden;-webkit-mask-image:linear-gradient(90deg,#000 85%,transparent)"><div class="a t" style="left:0;top:7.7px;font-family:'Liberation Sans', sans-serif;font-size:24px;line-height:24px;letter-spacing:1.1px;color:#c2c2c2">Extension</div></div>
<div class="a t" style="top:267.7px;font-family:'Liberation Sans', sans-serif;font-size:24px;line-height:24px;color:#c2c2c2;letter-spacing:1.1px;left:2752.6px;">Common</div>
<div class="a t" style="top:262.6px;font-family:'Liberation Sans', sans-serif;font-size:30px;line-height:30px;color:#aaaaaa;left:2872.0px;">&#187;</div>
<div class="a" style="left:2008.0px;top:302.0px;width:895.5px;height:2.5px;background:#a8a8a8;"></div>
<div class="a" style="left:2225.7px;top:298.0px;width:83.3px;height:6.0px;background:#dedede;"></div>
<div class="a t" style="top:322.7px;font-family:'Liberation Sans', sans-serif;font-size:24px;line-height:24px;color:#c4c4c4;letter-spacing:1.05px;right:516.2px;">Light Color</div>
<div class="a" style="left:2406.0px;top:314.0px;width:99.5px;height:40.0px;background:#ffffff;"></div>
<div class="a" style="left:2510.0px;top:314.0px;width:129.0px;height:40.0px;background:#525252;"></div>
<div class="a t" style="top:325.6px;font-family:'Liberation Mono', monospace;font-size:24px;line-height:24px;color:#cfcfcf;left:2518.0px;">1</div>
<div class="a" style="left:2643.0px;top:314.0px;width:129.0px;height:40.0px;background:#525252;"></div>
<div class="a t" style="top:325.6px;font-family:'Liberation Mono', monospace;font-size:24px;line-height:24px;color:#cfcfcf;left:2651.0px;">1</div>
<div class="a" style="left:2777.0px;top:314.0px;width:129.0px;height:40.0px;background:#525252;"></div>
<div class="a t" style="top:325.6px;font-family:'Liberation Mono', monospace;font-size:24px;line-height:24px;color:#cfcfcf;left:2785.0px;">1</div>
<div class="a t" style="top:366.7px;font-family:'Liberation Sans', sans-serif;font-size:24px;line-height:24px;color:#c4c4c4;letter-spacing:1.05px;right:516.2px;">Dimmer</div>
<div class="a" style="left:2406.0px;top:358.0px;width:99.5px;height:40.0px;background:#525252;"></div>
<div class="a t" style="top:369.6px;font-family:'Liberation Mono', monospace;font-size:24px;line-height:24px;color:#cfcfcf;left:2413.5px;">4</div>
<div class="a" style="left:2510.0px;top:376.0px;width:395.0px;height:4.0px;background:#2a2a2a;"></div>
<div class="a" style="left:2888.0px;top:363.0px;width:18.0px;height:30.0px;background:#5c5c5c;box-shadow:inset 0 0 0 1.5px #333;"></div>
<div class="a t" style="top:410.7px;font-family:'Liberation Sans', sans-serif;font-size:24px;line-height:24px;color:#c4c4c4;letter-spacing:1.05px;right:516.2px;">Light Type</div>
<div class="a" style="left:2406.0px;top:403.0px;width:499.5px;height:39.0px;background:#5c5c5c;box-shadow:inset 0 0 0 2px #353535;"></div>
<div class="a t" style="top:411.7px;font-family:'Liberation Sans', sans-serif;font-size:24px;line-height:24px;color:#cfcfcf;letter-spacing:1.0px;left:2416.0px;">Cone Light</div>
<svg class="a" style="left:2879px;top:416px;" width="22" height="12" viewBox="0 0 22 12"><path d="M0 0 H21 L10.5 11 Z" fill="#bdbdbd"/></svg>
<div class="a t" style="top:454.7px;font-family:'Liberation Sans', sans-serif;font-size:24px;line-height:24px;color:#c4c4c4;letter-spacing:1.05px;right:516.2px;">Cone Angle</div>
<div class="a" style="left:2406.0px;top:446.0px;width:99.5px;height:40.0px;background:#525252;"></div>
<div class="a t" style="top:457.6px;font-family:'Liberation Mono', monospace;font-size:24px;line-height:24px;color:#cfcfcf;left:2413.5px;">10</div>
<div class="a" style="left:2554.0px;top:464.0px;width:351.0px;height:4.0px;background:#2a2a2a;"></div>
<div class="a" style="left:2565.5px;top:451.0px;width:18.0px;height:30.0px;background:#5c5c5c;box-shadow:inset 0 0 0 1.5px #333;"></div>
<div class="a" style="left:2511.0px;top:447.0px;width:38.0px;height:37.5px;background:#c8c8c8;box-shadow:inset 0 0 0 1.5px #555;"></div>
<div class="a" style="left:2529.0px;top:465.0px;width:15.0px;height:1.5px;background:#111;"></div>
<div class="a" style="left:2534.0px;top:463.5px;width:10.0px;height:1.5px;background:#111;"></div>
<div class="a t" style="top:498.7px;font-family:'Liberation Sans', sans-serif;font-size:24px;line-height:24px;color:#c4c4c4;letter-spacing:1.05px;right:516.2px;">Cone Delta</div>
<div class="a" style="left:2406.0px;top:490.0px;width:99.5px;height:40.0px;background:#525252;"></div>
<div class="a t" style="top:501.6px;font-family:'Liberation Mono', monospace;font-size:24px;line-height:24px;color:#cfcfcf;left:2413.5px;">3</div>
<div class="a" style="left:2554.0px;top:508.0px;width:351.0px;height:4.0px;background:#2a2a2a;"></div>
<div class="a" style="left:2559.3px;top:495.0px;width:18.0px;height:30.0px;background:#5c5c5c;box-shadow:inset 0 0 0 1.5px #333;"></div>
<div class="a" style="left:2511.0px;top:491.0px;width:38.0px;height:37.5px;background:#c8c8c8;box-shadow:inset 0 0 0 1.5px #555;"></div>
<div class="a" style="left:2529.0px;top:509.5px;width:17.0px;height:1.5px;background:#111;"></div>
<div class="a t" style="top:542.7px;font-family:'Liberation Sans', sans-serif;font-size:24px;line-height:24px;color:#c4c4c4;letter-spacing:1.05px;right:516.2px;">Cone Rolloff</div>
<div class="a" style="left:2406.0px;top:534.0px;width:99.5px;height:40.0px;background:#525252;"></div>
<div class="a t" style="top:545.6px;font-family:'Liberation Mono', monospace;font-size:24px;line-height:24px;color:#cfcfcf;left:2413.5px;">1</div>
<div class="a" style="left:2510.0px;top:552.0px;width:395.0px;height:4.0px;background:#2a2a2a;"></div>
<div class="a" style="left:2551.0px;top:539.0px;width:18.0px;height:30.0px;background:#5c5c5c;box-shadow:inset 0 0 0 1.5px #333;"></div>
<div class="a t" style="top:586.7px;font-family:'Liberation Sans', sans-serif;font-size:24px;line-height:24px;color:#c4c4c4;letter-spacing:1.05px;right:516.2px;">Distance-Attenuated</div>
<div class="a" style="left:2406.0px;top:579.0px;width:99.5px;height:39.0px;background:#55555c;box-shadow:inset 0 0 0 1.5px #333;"></div>
<div class="a" style="left:2407.5px;top:580.5px;width:50.5px;height:36.0px;background:#2b2b2b;"></div>
<div class="a t" style="top:588.7px;font-family:'Liberation Sans', sans-serif;font-size:24px;line-height:24px;color:#d0d0d0;letter-spacing:0.5px;left:2415.0px;">Off</div>
<div class="a t" style="top:630.7px;font-family:'Liberation Sans', sans-serif;font-size:24px;line-height:24px;color:#5f5f5f;letter-spacing:1.05px;right:516.2px;">Attenuation Start</div>
<div class="a t" style="top:633.6px;font-family:'Liberation Mono', monospace;font-size:24px;line-height:24px;color:#5f5f5f;left:2413.7px;">1</div>
<div class="a" style="left:2510.0px;top:640.0px;width:395.0px;height:4.0px;background:#484848;"></div>
<div class="a" style="left:2515.4px;top:627.0px;width:19.0px;height:30.0px;background:#444444;box-shadow:inset 0 0 0 1.5px #4e4e4e;"></div>
<div class="a t" style="top:674.7px;font-family:'Liberation Sans', sans-serif;font-size:24px;line-height:24px;color:#5f5f5f;letter-spacing:1.05px;right:516.2px;">Attenuation End</div>
<div class="a t" style="top:677.6px;font-family:'Liberation Mono', monospace;font-size:24px;line-height:24px;color:#5f5f5f;left:2413.7px;">100</div>
<div class="a" style="left:2510.0px;top:684.0px;width:395.0px;height:4.0px;background:#484848;"></div>
<div class="a" style="left:2887.7px;top:671.0px;width:19.0px;height:30.0px;background:#444444;box-shadow:inset 0 0 0 1.5px #4e4e4e;"></div>
<div class="a t" style="top:718.7px;font-family:'Liberation Sans', sans-serif;font-size:24px;line-height:24px;color:#5f5f5f;letter-spacing:1.05px;right:516.2px;">Attenuation Rolloff</div>
<div class="a t" style="top:721.6px;font-family:'Liberation Mono', monospace;font-size:24px;line-height:24px;color:#5f5f5f;left:2413.7px;">1</div>
<div class="a" style="left:2510.0px;top:728.0px;width:395.0px;height:4.0px;background:#484848;"></div>
<div class="a" style="left:2550.0px;top:715.0px;width:19.0px;height:30.0px;background:#444444;box-shadow:inset 0 0 0 1.5px #4e4e4e;"></div>
<div class="a t" style="top:762.7px;font-family:'Liberation Sans', sans-serif;font-size:24px;line-height:24px;color:#c4c4c4;letter-spacing:1.05px;right:516.2px;">Projector Map Type</div>
<div class="a" style="left:2406.0px;top:755.0px;width:499.5px;height:39.0px;background:#5c5c5c;box-shadow:inset 0 0 0 2px #353535;"></div>
<div class="a t" style="top:763.7px;font-family:'Liberation Sans', sans-serif;font-size:24px;line-height:24px;color:#cfcfcf;letter-spacing:1.0px;left:2416.0px;">Spot</div>
<svg class="a" style="left:2879px;top:768px;" width="22" height="12" viewBox="0 0 22 12"><path d="M0 0 H21 L10.5 11 Z" fill="#bdbdbd"/></svg>
<div class="a t" style="top:806.7px;font-family:'Liberation Sans', sans-serif;font-size:24px;line-height:24px;color:#c4c4c4;letter-spacing:1.05px;right:516.2px;">Projector Map</div>
<div class="a" style="left:2405.6px;top:798.6px;width:460.0px;height:39.0px;background:#b5b5b5;"></div>
<div class="a t" style="top:807.7px;font-family:'Liberation Sans', sans-serif;font-size:24px;line-height:24px;color:#e0e0e0;left:2871.7px;">&gt;&gt;</div>
<div class="a t" style="top:850.7px;font-family:'Liberation Sans', sans-serif;font-size:24px;line-height:24px;color:#c4c4c4;letter-spacing:1.05px;right:516.2px;">Projector Map Mode</div>
<div class="a" style="left:2406.0px;top:843.0px;width:499.5px;height:39.0px;background:#5c5c5c;box-shadow:inset 0 0 0 2px #353535;"></div>
<div class="a t" style="top:851.7px;font-family:'Liberation Sans', sans-serif;font-size:24px;line-height:24px;color:#cfcfcf;letter-spacing:1.0px;left:2416.0px;">Simple Horizontal FOV</div>
<svg class="a" style="left:2879px;top:856px;" width="22" height="12" viewBox="0 0 22 12"><path d="M0 0 H21 L10.5 11 Z" fill="#bdbdbd"/></svg>
<div class="a t" style="top:894.7px;font-family:'Liberation Sans', sans-serif;font-size:24px;line-height:24px;color:#c4c4c4;letter-spacing:1.05px;right:516.2px;">Projector Angle</div>
<div class="a" style="left:2406.0px;top:886.0px;width:99.5px;height:40.0px;background:#525252;"></div>
<div class="a t" style="top:897.6px;font-family:'Liberation Mono', monospace;font-size:24px;line-height:24px;color:#cfcfcf;left:2413.5px;">10</div>
<div class="a" style="left:2510.0px;top:904.0px;width:395.0px;height:4.0px;background:#2a2a2a;"></div>
<div class="a" style="left:2521.8px;top:891.0px;width:18.0px;height:30.0px;background:#5c5c5c;box-shadow:inset 0 0 0 1.5px #333;"></div>
<div class="a t" style="top:938.7px;font-family:'Liberation Sans', sans-serif;font-size:24px;line-height:24px;color:#c4c4c4;letter-spacing:1.05px;right:516.2px;">Polygon Front Faces</div>
<div class="a" style="left:2406.0px;top:931.0px;width:499.5px;height:39.0px;background:#5c5c5c;box-shadow:inset 0 0 0 2px #353535;"></div>
<div class="a t" style="top:939.7px;font-family:'Liberation Sans', sans-serif;font-size:24px;line-height:24px;color:#cfcfcf;letter-spacing:1.0px;left:2416.0px;">Front Lit</div>
<svg class="a" style="left:2879px;top:944px;" width="22" height="12" viewBox="0 0 22 12"><path d="M0 0 H21 L10.5 11 Z" fill="#bdbdbd"/></svg>
<div class="a t" style="top:982.7px;font-family:'Liberation Sans', sans-serif;font-size:24px;line-height:24px;color:#c4c4c4;letter-spacing:1.05px;right:516.2px;">Polygon Back Faces</div>
<div class="a" style="left:2406.0px;top:975.0px;width:499.5px;height:39.0px;background:#5c5c5c;box-shadow:inset 0 0 0 2px #353535;"></div>
<div class="a t" style="top:983.7px;font-family:'Liberation Sans', sans-serif;font-size:24px;line-height:24px;color:#cfcfcf;letter-spacing:1.0px;left:2416.0px;">Front Lit</div>
<svg class="a" style="left:2879px;top:988px;" width="22" height="12" viewBox="0 0 22 12"><path d="M0 0 H21 L10.5 11 Z" fill="#bdbdbd"/></svg>
<div class="a" style="left:578.0px;top:1460.5px;width:2336.0px;height:1.5px;background:#5a5a5a;"></div>
<div class="a" style="left:578.0px;top:1462.0px;width:556.0px;height:136.0px;background:#0e0d17;"></div>
<div class="a t" style="top:1476.8px;font-family:'Liberation Sans', sans-serif;font-size:24.5px;line-height:24.5px;color:#8d919a;letter-spacing:1.2px;left:591.0px;">Start:</div>
<div class="a t" style="top:1476.8px;font-family:'Liberation Sans', sans-serif;font-size:24.5px;line-height:24.5px;color:#7f97d2;letter-spacing:1.2px;left:713.0px;">1</div>
<div class="a t" style="top:1476.8px;font-family:'Liberation Sans', sans-serif;font-size:24.5px;line-height:24.5px;color:#8d919a;letter-spacing:1.2px;left:851.0px;">End:</div>
<div class="a t" style="top:1476.8px;font-family:'Liberation Sans', sans-serif;font-size:24.5px;line-height:24.5px;color:#7f97d2;letter-spacing:1.2px;left:970.5px;">600</div>
<div class="a t" style="top:1507.1px;font-family:'Liberation Sans', sans-serif;font-size:24.5px;line-height:24.5px;color:#8d919a;letter-spacing:1.2px;left:591.0px;">RStart:</div>
<div class="a t" style="top:1507.1px;font-family:'Liberation Sans', sans-serif;font-size:24.5px;line-height:24.5px;color:#7f97d2;letter-spacing:1.2px;left:713.0px;">1</div>
<div class="a t" style="top:1507.1px;font-family:'Liberation Sans', sans-serif;font-size:24.5px;line-height:24.5px;color:#8d919a;letter-spacing:1.2px;left:851.0px;">REnd:</div>
<div class="a t" style="top:1507.1px;font-family:'Liberation Sans', sans-serif;font-size:24.5px;line-height:24.5px;color:#7f97d2;letter-spacing:1.2px;left:970.5px;">600</div>
<div class="a t" style="top:1537.4px;font-family:'Liberation Sans', sans-serif;font-size:24.5px;line-height:24.5px;color:#8d919a;letter-spacing:1.2px;left:591.0px;">FPS:</div>
<div class="a t" style="top:1537.4px;font-family:'Liberation Sans', sans-serif;font-size:24.5px;line-height:24.5px;color:#7f97d2;letter-spacing:1.2px;left:713.0px;">60.0</div>
<div class="a t" style="top:1537.4px;font-family:'Liberation Sans', sans-serif;font-size:24.5px;line-height:24.5px;color:#8d919a;letter-spacing:1.2px;left:851.0px;">Tempo:</div>
<div class="a t" style="top:1537.4px;font-family:'Liberation Sans', sans-serif;font-size:24.5px;line-height:24.5px;color:#7f97d2;letter-spacing:1.2px;left:970.5px;">120.0</div>
<div class="a t" style="top:1567.7px;font-family:'Liberation Sans', sans-serif;font-size:24.5px;line-height:24.5px;color:#8d919a;letter-spacing:1.2px;left:591.0px;">ResetF:</div>
<div class="a t" style="top:1567.7px;font-family:'Liberation Sans', sans-serif;font-size:24.5px;line-height:24.5px;color:#7f97d2;letter-spacing:1.2px;left:713.0px;">1</div>
<div class="a t" style="top:1567.7px;font-family:'Liberation Sans', sans-serif;font-size:24.5px;line-height:24.5px;color:#8d919a;letter-spacing:1.2px;left:851.0px;">T Sig:</div>
<div class="a t" style="top:1567.7px;font-family:'Liberation Sans', sans-serif;font-size:24.5px;line-height:24.5px;color:#7f97d2;letter-spacing:1.2px;left:970.5px;">4</div>
<div class="a t" style="top:1567.7px;font-family:'Liberation Sans', sans-serif;font-size:24.5px;line-height:24.5px;color:#7f97d2;left:1040.0px;">4</div>
<div class="a" style="left:1134.0px;top:1462.0px;width:1766.0px;height:28.0px;background:#0e0e0e;"></div>
<div class="a" style="left:1134.0px;top:1489.0px;width:1766.0px;height:1.5px;background:#5a5a5a;"></div>
<div class="a t" style="top:1467.9px;font-family:'Liberation Mono', monospace;font-size:21px;line-height:21px;color:#a2a2a2;left:1138.0px;">1</div>
<div class="a" style="left:1281.9px;top:1462.0px;width:1.5px;height:28.0px;background:#5a5a5a;"></div>
<div class="a t" style="top:1467.9px;font-family:'Liberation Mono', monospace;font-size:21px;line-height:21px;color:#a2a2a2;left:1286.4px;">51</div>
<div class="a" style="left:1430.3px;top:1462.0px;width:1.5px;height:28.0px;background:#5a5a5a;"></div>
<div class="a t" style="top:1467.9px;font-family:'Liberation Mono', monospace;font-size:21px;line-height:21px;color:#a2a2a2;left:1434.8px;">101</div>
<div class="a" style="left:1578.7px;top:1462.0px;width:1.5px;height:28.0px;background:#5a5a5a;"></div>
<div class="a t" style="top:1467.9px;font-family:'Liberation Mono', monospace;font-size:21px;line-height:21px;color:#a2a2a2;left:1583.2px;">151</div>
<div class="a" style="left:1727.1px;top:1462.0px;width:1.5px;height:28.0px;background:#5a5a5a;"></div>
<div class="a t" style="top:1467.9px;font-family:'Liberation Mono', monospace;font-size:21px;line-height:21px;color:#a2a2a2;left:1731.6px;">201</div>
<div class="a" style="left:1875.5px;top:1462.0px;width:1.5px;height:28.0px;background:#5a5a5a;"></div>
<div class="a t" style="top:1467.9px;font-family:'Liberation Mono', monospace;font-size:21px;line-height:21px;color:#a2a2a2;left:1880.0px;">251</div>
<div class="a" style="left:2023.9px;top:1462.0px;width:1.5px;height:28.0px;background:#5a5a5a;"></div>
<div class="a t" style="top:1467.9px;font-family:'Liberation Mono', monospace;font-size:21px;line-height:21px;color:#a2a2a2;left:2028.4px;">301</div>
<div class="a" style="left:2172.3px;top:1462.0px;width:1.5px;height:28.0px;background:#5a5a5a;"></div>
<div class="a t" style="top:1467.9px;font-family:'Liberation Mono', monospace;font-size:21px;line-height:21px;color:#a2a2a2;left:2176.8px;">351</div>
<div class="a" style="left:2320.7px;top:1462.0px;width:1.5px;height:28.0px;background:#5a5a5a;"></div>
<div class="a t" style="top:1467.9px;font-family:'Liberation Mono', monospace;font-size:21px;line-height:21px;color:#a2a2a2;left:2325.2px;">401</div>
<div class="a" style="left:2469.1px;top:1462.0px;width:1.5px;height:28.0px;background:#5a5a5a;"></div>
<div class="a t" style="top:1467.9px;font-family:'Liberation Mono', monospace;font-size:21px;line-height:21px;color:#a2a2a2;left:2473.6px;">451</div>
<div class="a" style="left:2617.5px;top:1462.0px;width:1.5px;height:28.0px;background:#5a5a5a;"></div>
<div class="a t" style="top:1467.9px;font-family:'Liberation Mono', monospace;font-size:21px;line-height:21px;color:#a2a2a2;left:2622.0px;">501</div>
<div class="a" style="left:2765.9px;top:1462.0px;width:1.5px;height:28.0px;background:#5a5a5a;"></div>
<div class="a t" style="top:1467.9px;font-family:'Liberation Mono', monospace;font-size:21px;line-height:21px;color:#a2a2a2;left:2770.4px;">551</div>
<div class="a t" style="top:1467.9px;font-family:'Liberation Mono', monospace;font-size:21px;line-height:21px;color:#a2a2a2;left:2860.0px;">600</div>
<div class="a" style="left:1134.0px;top:1462.0px;width:1.5px;height:136.0px;background:#5a5a5a;"></div>
<div class="a" style="left:1612.5px;top:1463.0px;width:3.0px;height:26.0px;background:#5a6ab0;"></div>
<div class="a" style="left:1134.0px;top:1490.5px;width:1766.0px;height:22.5px;background:#0e0e0e;"></div>
<div class="a" style="left:1138.0px;top:1493.0px;width:42.0px;height:17.0px;background:#4a4a4a;box-shadow:inset 0 0 0 1px #6a6a6a;"></div>
<div class="a" style="left:1182.0px;top:1493.0px;width:1678.0px;height:17.0px;background:#3a4868;"></div>
<div class="a" style="left:2862.0px;top:1493.0px;width:38.0px;height:17.0px;background:#4a4a4a;box-shadow:inset 0 0 0 1px #6a6a6a;"></div>
<div class="a" style="left:1134.0px;top:1513.0px;width:1766.0px;height:1.5px;background:#5a5a5a;"></div>
<div class="a" style="left:1135.5px;top:1514.5px;width:1764.5px;height:84.0px;background:#303036;"></div>
<div class="a" style="left:1142.0px;top:1518.0px;width:40.0px;height:39.0px;background:#393a40;box-shadow:inset 0 0 0 1.5px #5f6064;"></div>
<div class="a" style="left:1142.0px;top:1556.0px;width:40.0px;height:39.0px;background:#393a40;box-shadow:inset 0 0 0 1.5px #5f6064;"></div>
<svg class="a" style="left:1142px;top:1518px;" width="40" height="39" viewBox="0 0 40 39"><path d="M24 9 L16 30" stroke="#7a7a80" stroke-width="2"/></svg>
<svg class="a" style="left:1142px;top:1556px;" width="40" height="39" viewBox="0 0 40 39"><path d="M15 8 H25 M20 8 V30 M15 30 H25" stroke="#7a7a80" stroke-width="2.2"/></svg>
<div class="a" style="left:1188.0px;top:1518.0px;width:136.0px;height:37.0px;background:#2f3036;box-shadow:inset 0 0 0 1.5px #5f6064;"></div>
<div class="a" style="left:1190.0px;top:1520.0px;width:132.0px;height:33.0px;background:#9a7656;"></div>
<div class="a t" style="top:1524.8px;font-family:'Liberation Sans', sans-serif;font-size:25px;line-height:25px;color:#f0f0f0;letter-spacing:1.0px;left:756.0px;width:1000px;text-align:center;">TimeCode</div>
<div class="a" style="left:1188.0px;top:1556.0px;width:136.0px;height:38.0px;background:#393a40;box-shadow:inset 0 0 0 1.5px #64656a;"></div>
<div class="a t" style="top:1563.8px;font-family:'Liberation Sans', sans-serif;font-size:25px;line-height:25px;color:#a9b3cc;letter-spacing:1.0px;left:756.0px;width:1000px;text-align:center;">Beats</div>
<div class="a" style="left:1329.0px;top:1518.0px;width:398.5px;height:77.0px;background:#000;box-shadow:inset 0 0 0 1.5px #5f6064;"></div>
<div class="a t" style="top:1533.8px;font-family:'Liberation Sans', sans-serif;font-size:51px;line-height:51px;color:#7ea0e8;letter-spacing:4.2px;left:1028.0px;width:1000px;text-align:center;">00:00:02:42</div>
<div class="a" style="left:1732.4px;top:1518.0px;width:269.0px;height:77.0px;background:#000;box-shadow:inset 0 0 0 1.5px #5f6064;"></div>
<div class="a t" style="top:1533.8px;font-family:'Liberation Sans', sans-serif;font-size:51px;line-height:51px;color:#7ea0e8;letter-spacing:1px;left:1369.0px;width:1000px;text-align:center;">162</div>
<div class="a" style="left:2006.5px;top:1518.0px;width:77.0px;height:78.0px;background:#393a40;box-shadow:inset 0 0 0 1.5px #64656a;"></div>
<svg class="a" style="left:2006px;top:1518px;" width="78" height="78" viewBox="0 0 78 78"><rect x="26.5" y="29" width="2.8" height="20" fill="#aab3c8"/><path d="M29 39 L39.7 29 L39.7 49 Z M40.2 39 L50.5 29 L50.5 49 Z" fill="#aab3c8"/></svg>
<div class="a" style="left:2088.0px;top:1518.0px;width:77.0px;height:78.0px;background:#393a40;box-shadow:inset 0 0 0 1.5px #64656a;"></div>
<svg class="a" style="left:2088px;top:1518px;" width="78" height="78" viewBox="0 0 78 78"><rect x="32" y="29" width="4.5" height="20" fill="#aab3c8"/><rect x="40.8" y="29" width="4.3" height="20" fill="#aab3c8"/></svg>
<div class="a" style="left:2170.0px;top:1518.0px;width:77.0px;height:78.0px;background:#393a40;box-shadow:inset 0 0 0 1.5px #64656a;"></div>
<svg class="a" style="left:2170px;top:1518px;" width="78" height="78" viewBox="0 0 78 78"><path d="M41.2 29 L30.9 39 L41.2 49 Z" fill="#aab3c8"/></svg>
<div class="a" style="left:2252.4px;top:1518.0px;width:77.0px;height:78.0px;background:#bd8b57;box-shadow:inset 0 0 0 1.5px #5f6064;"></div>
<svg class="a" style="left:2252px;top:1518px;" width="78" height="78" viewBox="0 0 78 78"><path d="M34.7 29 L44.6 39 L34.7 49 Z" fill="#3a0a05"/></svg>
<div class="a" style="left:2334.4px;top:1518.0px;width:77.0px;height:78.0px;background:#393a40;box-shadow:inset 0 0 0 1.5px #64656a;"></div>
<svg class="a" style="left:2334px;top:1518px;" width="78" height="78" viewBox="0 0 78 78"><path d="M33 40 H44" stroke="#aab3c8" stroke-width="3"/></svg>
<div class="a" style="left:2416.0px;top:1518.0px;width:77.0px;height:78.0px;background:#393a40;box-shadow:inset 0 0 0 1.5px #64656a;"></div>
<svg class="a" style="left:2416px;top:1518px;" width="78" height="78" viewBox="0 0 78 78"><path d="M38.5 30 V50 M28.5 40 H48.5" stroke="#aab3c8" stroke-width="3"/></svg>
<div class="a t" style="top:1522.8px;font-family:'Liberation Sans', sans-serif;font-size:25px;line-height:25px;color:#a9b3cc;letter-spacing:1.0px;left:2505.0px;">Range Limit</div>
<div class="a" style="left:2501.0px;top:1561.0px;width:101.0px;height:33.0px;background:#bd8b57;box-shadow:inset 0 0 0 1.5px #5f6064;"></div>
<div class="a t" style="top:1566.8px;font-family:'Liberation Sans', sans-serif;font-size:25px;line-height:25px;color:#3d0a05;letter-spacing:1.0px;left:2051.5px;width:1000px;text-align:center;">Loop</div>
<div class="a" style="left:2607.0px;top:1561.0px;width:86.0px;height:33.0px;background:#393a40;box-shadow:inset 0 0 0 1.5px #64656a;"></div>
<div class="a t" style="top:1566.8px;font-family:'Liberation Sans', sans-serif;font-size:25px;line-height:25px;color:#a9b3cc;letter-spacing:1.0px;left:2150.0px;width:1000px;text-align:center;">Once</div>
<div class="a" style="left:2900px;top:1455px;width:60px;height:160px;background:#242426;border-radius:14px"></div></body></html>
